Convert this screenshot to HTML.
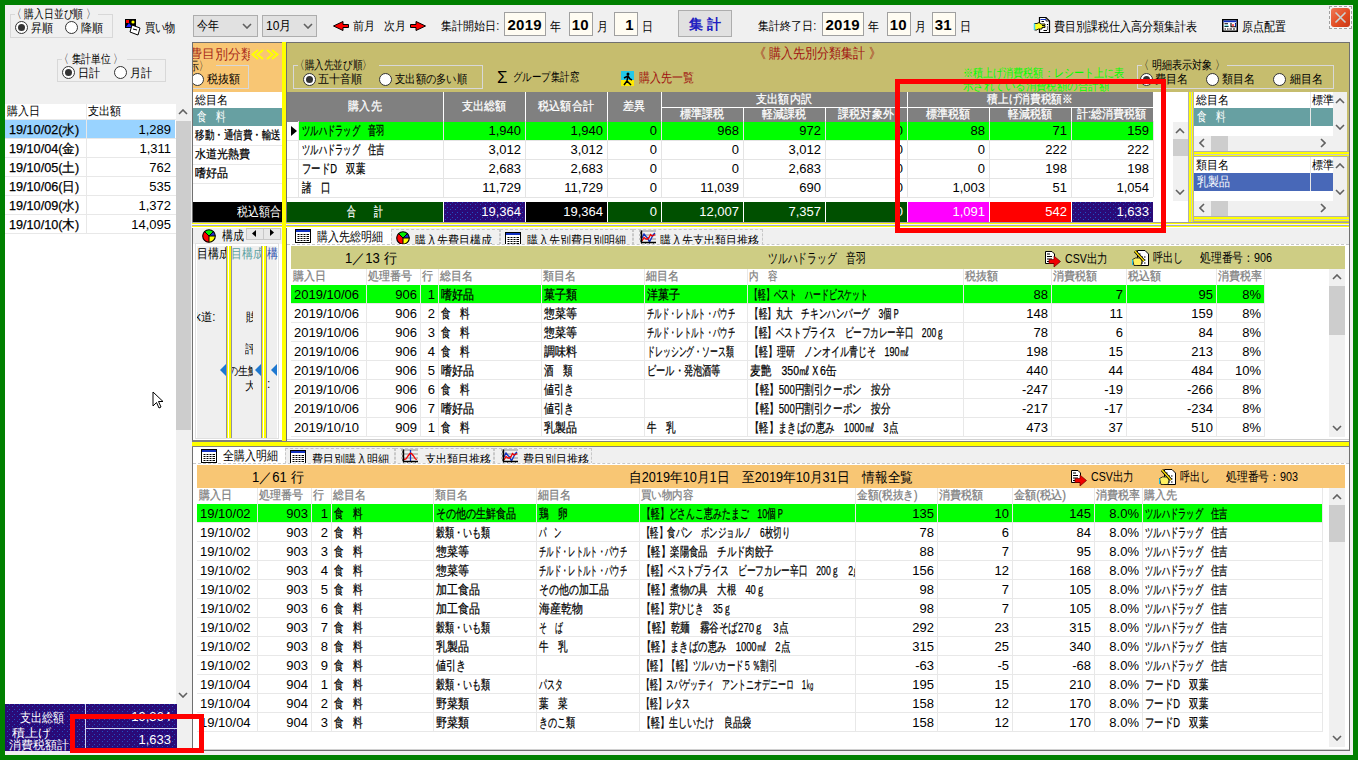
<!DOCTYPE html><html><head><meta charset="utf-8"><style>
*{margin:0;padding:0}
body{width:1358px;height:760px;overflow:hidden;background:#008000;position:relative;font-family:"Liberation Sans",sans-serif;font-size:12px;color:#000}
div,svg{position:absolute}
.t{white-space:nowrap}
.c{white-space:nowrap;overflow:hidden;box-sizing:border-box}
.c span{-webkit-text-stroke:0.25px currentColor}
.ro{width:13px;height:13px;border-radius:50%;border:1px solid #333;box-sizing:border-box}
.rd{left:2px;top:2px;width:7px;height:7px;border-radius:50%;background:#333}
.cb{background:#e1e1e1;border:1px solid #adadad;box-sizing:border-box}
.db{background:#fffcf2;border:1px solid #a0a0a0;box-sizing:border-box;font-weight:bold;font-size:15px;line-height:24px;text-align:right;padding-right:3px;letter-spacing:0.3px}
</style></head><body>
<div style="left:5px;top:5px;width:1348px;height:750px;background:#f0f0f0"></div>
<div style="left:10px;top:14px;width:103px;height:24px;border:1px solid #d8d8d8;border-top:none;box-sizing:border-box"></div>
<div style="left:10px;top:14px;width:5px;height:1px;background:#d8d8d8"></div>
<div style="left:98px;top:14px;width:15px;height:1px;background:#d8d8d8"></div>
<div class="t" style="left:12px;top:7px;height:14px;line-height:14px;color:#000"><span style="display:inline-block;transform:scaleX(0.815);transform-origin:left">〈 購入日並び順 〉</span></div>
<div class="ro" style="left:15px;top:21px;background:#fff"><div class="rd"></div></div>
<div class="t" style="left:31px;top:21px;height:14px;line-height:14px;"><span style="display:inline-block;transform:scaleX(0.917);transform-origin:left">昇順</span></div>
<div class="ro" style="left:65px;top:21px;background:#fff"></div>
<div class="t" style="left:81px;top:21px;height:14px;line-height:14px;"><span style="display:inline-block;transform:scaleX(0.917);transform-origin:left">降順</span></div>
<svg style="left:125px;top:19px" width="17" height="17"><rect x="0" y="0" width="11" height="9" fill="#000"/><rect x="1" y="1" width="3" height="3" fill="#f00"/><circle cx="8" cy="3" r="1.6" fill="#ff0"/><path d="M1 8 L4 4 L7 8Z" fill="#22f"/><path d="M7 6 L15 9 L13 16 L5 13Z" fill="#fff" stroke="#000" stroke-width="1"/><path d="M8 10 L12 11" stroke="#000"/></svg>
<div class="t" style="left:145px;top:20px;height:15px;line-height:15px;font-size:13px"><span style="display:inline-block;transform:scaleX(0.781);transform-origin:left">買い物</span></div>
<div class="cb" style="left:193px;top:15px;width:65px;height:22px;"></div>
<div class="t" style="left:197px;top:15px;height:22px;line-height:22px;font-size:13px"><span style="display:inline-block;transform:scaleX(0.846);transform-origin:left">今年</span></div>
<svg style="position:absolute;left:242px;top:23px" width="10" height="6"><path d="M1 1 L5 5 L9 1" stroke="#606060" stroke-width="1.6" fill="none"/></svg>
<div class="cb" style="left:262px;top:15px;width:55px;height:22px;"></div>
<div class="t" style="left:266px;top:15px;height:22px;line-height:22px;font-size:13px"><span style="display:inline-block;transform:scaleX(0.927);transform-origin:left">10月</span></div>
<svg style="position:absolute;left:303px;top:23px" width="10" height="6"><path d="M1 1 L5 5 L9 1" stroke="#606060" stroke-width="1.6" fill="none"/></svg>
<svg style="left:333px;top:21px" width="17" height="11"><path d="M0.5 5 L10 0.5 V3.5 H15.5 V6.5 H10 V9.5 Z" fill="#f00" stroke="#000" stroke-width="1"/></svg>
<div class="t" style="left:353px;top:19px;height:15px;line-height:15px;"><span style="display:inline-block;transform:scaleX(0.917);transform-origin:left">前月</span></div>
<div class="t" style="left:384px;top:19px;height:15px;line-height:15px;"><span style="display:inline-block;transform:scaleX(0.917);transform-origin:left">次月</span></div>
<svg style="left:410px;top:21px" width="17" height="11"><path d="M15.5 5 L6 0.5 V3.5 H0.5 V6.5 H6 V9.5 Z" fill="#f00" stroke="#000" stroke-width="1"/></svg>
<div class="t" style="left:441px;top:19px;height:15px;line-height:15px;"><span style="display:inline-block;transform:scaleX(0.921);transform-origin:left">集計開始日:</span></div>
<div class="db" style="left:504px;top:12px;width:42px;height:24px;">2019</div>
<div class="t" style="left:550px;top:19px;height:15px;line-height:15px;font-size:13px"><span style="display:inline-block;transform:scaleX(0.846);transform-origin:left">年</span></div>
<div class="db" style="left:569px;top:12px;width:24px;height:24px;">10</div>
<div class="t" style="left:597px;top:19px;height:15px;line-height:15px;font-size:13px"><span style="display:inline-block;transform:scaleX(0.846);transform-origin:left">月</span></div>
<div class="db" style="left:614px;top:12px;width:24px;height:24px;">1</div>
<div class="t" style="left:642px;top:19px;height:15px;line-height:15px;font-size:13px"><span style="display:inline-block;transform:scaleX(0.846);transform-origin:left">日</span></div>
<div style="left:678px;top:10px;width:54px;height:27px;text-align:center;line-height:27px;color:#2020c0;font-weight:bold;font-size:14px;background:#e1e1e1;border:1px solid #adadad;box-sizing:border-box">集 計</div>
<div class="t" style="left:758px;top:19px;height:15px;line-height:15px;"><span style="display:inline-block;transform:scaleX(0.921);transform-origin:left">集計終了日:</span></div>
<div class="db" style="left:822px;top:12px;width:42px;height:24px;">2019</div>
<div class="t" style="left:868px;top:19px;height:15px;line-height:15px;font-size:13px"><span style="display:inline-block;transform:scaleX(0.846);transform-origin:left">年</span></div>
<div class="db" style="left:887px;top:12px;width:24px;height:24px;">10</div>
<div class="t" style="left:915px;top:19px;height:15px;line-height:15px;font-size:13px"><span style="display:inline-block;transform:scaleX(0.846);transform-origin:left">月</span></div>
<div class="db" style="left:932px;top:12px;width:24px;height:24px;">31</div>
<div class="t" style="left:960px;top:19px;height:15px;line-height:15px;font-size:13px"><span style="display:inline-block;transform:scaleX(0.846);transform-origin:left">日</span></div>
<svg style="left:1033px;top:16px" width="18" height="18"><path d="M6.5 1.5H13L16.5 5V16.5H6.5Z" fill="#fff" stroke="#000" stroke-width="1.2"/><path d="M13 1.5V5H16.5" fill="none" stroke="#000" stroke-width="0.8"/><path d="M7.5 3.5H13" stroke="#1030c0" stroke-width="1"/><path d="M8.5 5.5H11" stroke="#000" stroke-width="1"/><path d="M14.5 8v1M14.5 10.5v1M14.5 12.5v1M10.5 14.5H14" stroke="#000" stroke-width="1.2"/><path d="M1.5 7.5H4L6 6.5L8 8H12V9.5H9L12 10V11.5H9V13H5L4 14H1.5Z" fill="#ffff20" stroke="#000" stroke-width="0.9"/><path d="M1.5 7.5V14" stroke="#40d8f0" stroke-width="1.5"/></svg>
<div class="t" style="left:1054px;top:19px;height:15px;line-height:15px;font-size:13px"><span style="display:inline-block;transform:scaleX(0.846);transform-origin:left">費目別課税仕入高分類集計表</span></div>
<svg style="left:1222px;top:19px" width="16" height="13"><rect x="0.75" y="0.75" width="14.5" height="11.5" fill="#fff" stroke="#000" stroke-width="1.5"/><rect x="1.5" y="1.5" width="13" height="1.7" fill="#1030c0"/><path d="M2.5 4.7H6M2.5 7.5H6.5M9 4V7.7H13.5V4" stroke="#000" stroke-width="1.1" fill="none"/><path d="M2.5 6.8H6.5" stroke="#20d0e0" stroke-width="0.8"/><path d="M11 5V7.5" stroke="#f00000" stroke-width="1.2"/><path d="M13.5 4.5V7.5" stroke="#1030c0" stroke-width="1"/><path d="M2.5 10H4M5 10H6.5M7.5 10H10M11 10H13" stroke="#000" stroke-width="1.1"/></svg>
<div class="t" style="left:1242px;top:19px;height:15px;line-height:15px;font-size:13px"><span style="display:inline-block;transform:scaleX(0.846);transform-origin:left">原点配置</span></div>
<div style="left:1329px;top:6px;width:23px;height:23px;background:#f4f4f4;border:1px dashed #a0a0a0;box-sizing:border-box"></div>
<div style="left:1331px;top:8px;width:19px;height:19px;background:linear-gradient(135deg,#f07858,#e04a20 60%,#c83818);border-radius:3px"></div>
<svg style="left:1331px;top:8px" width="19" height="19"><path d="M4.5 4.5 L14.5 14.5 M14.5 4.5 L4.5 14.5" stroke="#c8d4d4" stroke-width="1.6"/></svg>
<div style="left:57px;top:59px;width:109px;height:23px;border:1px solid #d8d8d8;border-top:none;box-sizing:border-box"></div>
<div style="left:57px;top:59px;width:5px;height:1px;background:#d8d8d8"></div>
<div style="left:127px;top:59px;width:39px;height:1px;background:#d8d8d8"></div>
<div class="t" style="left:59px;top:52px;height:14px;line-height:14px;color:#000"><span style="display:inline-block;transform:scaleX(0.816);transform-origin:left">〈 集計単位 〉</span></div>
<div class="ro" style="left:62px;top:66px;background:#fff"><div class="rd"></div></div>
<div class="t" style="left:78px;top:66px;height:14px;line-height:14px;"><span style="display:inline-block;transform:scaleX(0.917);transform-origin:left">日計</span></div>
<div class="ro" style="left:114px;top:66px;background:#fff"></div>
<div class="t" style="left:130px;top:66px;height:14px;line-height:14px;"><span style="display:inline-block;transform:scaleX(0.917);transform-origin:left">月計</span></div>
<div style="left:5px;top:104px;width:171px;height:647px;background:#fff"></div>
<div class="t" style="left:7px;top:104px;height:15px;line-height:15px;"><span style="display:inline-block;transform:scaleX(0.917);transform-origin:left">購入日</span></div>
<div class="t" style="left:88px;top:104px;height:15px;line-height:15px;"><span style="display:inline-block;transform:scaleX(0.917);transform-origin:left">支出額</span></div>
<div style="left:86px;top:104px;width:1px;height:15px;background:#e8e8e8"></div>
<div style="left:5px;top:120px;width:170px;height:18px;background:#99d3ff"></div>
<div style="left:5px;top:138px;width:171px;height:1px;background:#e8e8e8"></div>
<div style="left:86px;top:119px;width:1px;height:19px;background:#e8e8e8"></div>
<div class="c" style="left:5px;top:120px;width:81px;height:19px;line-height:19px;padding-left:4px;font-size:13px"><span style="display:inline-block;transform:scaleX(0.973);transform-origin:left">19/10/02(水)</span></div>
<div class="c" style="left:86px;top:120px;width:90px;height:19px;line-height:19px;text-align:right;padding-right:5px;font-size:13px">1,289</div>
<div style="left:5px;top:157px;width:171px;height:1px;background:#e8e8e8"></div>
<div style="left:86px;top:138px;width:1px;height:19px;background:#e8e8e8"></div>
<div class="c" style="left:5px;top:139px;width:81px;height:19px;line-height:19px;padding-left:4px;font-size:13px"><span style="display:inline-block;transform:scaleX(0.973);transform-origin:left">19/10/04(金)</span></div>
<div class="c" style="left:86px;top:139px;width:90px;height:19px;line-height:19px;text-align:right;padding-right:5px;font-size:13px">1,311</div>
<div style="left:5px;top:176px;width:171px;height:1px;background:#e8e8e8"></div>
<div style="left:86px;top:157px;width:1px;height:19px;background:#e8e8e8"></div>
<div class="c" style="left:5px;top:158px;width:81px;height:19px;line-height:19px;padding-left:4px;font-size:13px"><span style="display:inline-block;transform:scaleX(0.973);transform-origin:left">19/10/05(土)</span></div>
<div class="c" style="left:86px;top:158px;width:90px;height:19px;line-height:19px;text-align:right;padding-right:5px;font-size:13px">762</div>
<div style="left:5px;top:195px;width:171px;height:1px;background:#e8e8e8"></div>
<div style="left:86px;top:176px;width:1px;height:19px;background:#e8e8e8"></div>
<div class="c" style="left:5px;top:177px;width:81px;height:19px;line-height:19px;padding-left:4px;font-size:13px"><span style="display:inline-block;transform:scaleX(0.973);transform-origin:left">19/10/06(日)</span></div>
<div class="c" style="left:86px;top:177px;width:90px;height:19px;line-height:19px;text-align:right;padding-right:5px;font-size:13px">535</div>
<div style="left:5px;top:214px;width:171px;height:1px;background:#e8e8e8"></div>
<div style="left:86px;top:195px;width:1px;height:19px;background:#e8e8e8"></div>
<div class="c" style="left:5px;top:196px;width:81px;height:19px;line-height:19px;padding-left:4px;font-size:13px"><span style="display:inline-block;transform:scaleX(0.973);transform-origin:left">19/10/09(水)</span></div>
<div class="c" style="left:86px;top:196px;width:90px;height:19px;line-height:19px;text-align:right;padding-right:5px;font-size:13px">1,372</div>
<div style="left:5px;top:233px;width:171px;height:1px;background:#e8e8e8"></div>
<div style="left:86px;top:214px;width:1px;height:19px;background:#e8e8e8"></div>
<div class="c" style="left:5px;top:215px;width:81px;height:19px;line-height:19px;padding-left:4px;font-size:13px"><span style="display:inline-block;transform:scaleX(0.973);transform-origin:left">19/10/10(木)</span></div>
<div class="c" style="left:86px;top:215px;width:90px;height:19px;line-height:19px;text-align:right;padding-right:5px;font-size:13px">14,095</div>
<div style="left:5px;top:119px;width:171px;height:1px;background:#e8e8e8"></div>
<div style="left:176px;top:104px;width:15px;height:600px;background:#f0f0f0"></div>
<div style="left:176px;top:121px;width:15px;height:309px;background:#cdcdcd"></div>
<svg style="position:absolute;left:178px;top:109px" width="10" height="6"><path d="M1 5 L5 1 L9 5" stroke="#606060" stroke-width="1.6" fill="none"/></svg>
<svg style="position:absolute;left:178px;top:692px" width="10" height="6"><path d="M1 1 L5 5 L9 1" stroke="#606060" stroke-width="1.6" fill="none"/></svg>
<svg style="left:152px;top:391px" width="14" height="20"><path d="M1 1 L1 15 L4.5 11.5 L7 17 L9 16 L6.5 10.5 L11 10.5Z" fill="#fff" stroke="#000" stroke-width="1"/></svg>
<div style="left:5px;top:704px;width:172px;height:47px;background:#2a0a78;background-image:radial-gradient(#2050c0 0.5px, transparent 0.6px),radial-gradient(#2050c0 0.5px, transparent 0.6px);background-size:5px 5px;background-position:0 0,2px 3px"></div>
<div style="left:85px;top:704px;width:1px;height:47px;background:#d0d0f0"></div>
<div style="left:86px;top:728px;width:91px;height:1px;background:#d0d0f0"></div>
<div class="t" style="left:20px;top:709px;height:18px;line-height:18px;color:#fff;font-size:13px"><span style="display:inline-block;transform:scaleX(0.846);transform-origin:left">支出総額</span></div>
<div class="t" style="left:12px;top:727px;height:12px;line-height:12px;color:#fff;font-size:12px"><span style="display:inline-block;transform:scaleX(1.083);transform-origin:left">積上げ</span></div>
<div class="t" style="left:9px;top:739px;height:12px;line-height:12px;color:#fff;font-size:12px"><span style="display:inline-block;transform:scaleX(1.000);transform-origin:left">消費税額計</span></div>
<div class="c" style="left:86px;top:705px;width:91px;height:23px;line-height:23px;text-align:right;padding-right:6px;color:#fff;font-size:13px">19,364</div>
<div class="c" style="left:86px;top:729px;width:91px;height:22px;line-height:22px;text-align:right;padding-right:6px;color:#fff;font-size:13px">1,633</div>
<div style="left:192px;top:42px;width:90px;height:180px;background:#fff;border-left:1px solid #707070;border-top:1px solid #707070;box-sizing:border-box;overflow:hidden"></div>
<div style="left:193px;top:43px;width:89px;height:49px;background:#f8c674"></div>
<div style="left:193px;top:43px;width:89px;height:49px;overflow:hidden"><div style="left:0;top:0;width:57px;height:20px;overflow:hidden"><div class="t" style="left:-4px;top:3px;color:#a82a1a;font-size:14px;line-height:16px"><span style="display:inline-block;transform:scaleX(0.930);transform-origin:left">費目別分類</span></div></div><svg style="left:58px;top:6px" width="29" height="11"><path d="M7 1L1.5 5.5L7 10M12 1L6.5 5.5L12 10M16 1L21.5 5.5L16 10M21 1L26.5 5.5L21 10" stroke="#ffff00" stroke-width="2" fill="none"/></svg><div style="left:-60px;top:22px;width:116px;height:24px;border:1px solid #d8d8d8;box-sizing:border-box"></div><div class="t" style="left:-3px;top:16px;font-size:12px;line-height:14px;background:#f8c674;padding-right:2px"><span style="display:inline-block;transform:scaleX(0.733);transform-origin:left">示〉</span></div><div class="t" style="left:14px;top:29px;font-size:12px;line-height:14px"><span style="display:inline-block;transform:scaleX(0.917);transform-origin:left">税抜額</span></div></div>
<div style="left:193px;top:72px;width:12px;height:15px;overflow:hidden"><div class="ro" style="left:-2px;top:1px;background:#fff"></div></div>
<div style="left:193px;top:92px;width:89px;height:16px;background:#fff"></div>
<div class="t" style="left:195px;top:92px;height:16px;line-height:16px;"><span style="display:inline-block;transform:scaleX(0.917);transform-origin:left">総目名</span></div>
<div style="left:193px;top:108px;width:89px;height:18px;background:#67a0a2"></div>
<div class="t" style="left:197px;top:108px;height:18px;line-height:18px;color:#fff;font-size:13px"><span style="display:inline-block;transform:scaleX(0.733);transform-origin:left">食　料</span></div>
<div class="c" style="left:193px;top:126px;width:88px;height:19px;line-height:19px;padding-left:2px;font-size:12px"><span style="display:inline-block;transform:scaleX(0.794);transform-origin:left">移動・通信費・輸送</span></div>
<div style="left:193px;top:145px;width:89px;height:1px;background:#e8e8e8"></div>
<div class="c" style="left:193px;top:145px;width:88px;height:19px;line-height:19px;padding-left:2px;font-size:12px"><span style="display:inline-block;transform:scaleX(0.917);transform-origin:left">水道光熱費</span></div>
<div style="left:193px;top:164px;width:89px;height:1px;background:#e8e8e8"></div>
<div class="c" style="left:193px;top:164px;width:88px;height:19px;line-height:19px;padding-left:2px;font-size:12px"><span style="display:inline-block;transform:scaleX(0.917);transform-origin:left">嗜好品</span></div>
<div style="left:193px;top:183px;width:89px;height:1px;background:#e8e8e8"></div>
<div style="left:193px;top:202px;width:89px;height:20px;background:#000"></div>
<div style="left:193px;top:202px;width:88px;height:20px;overflow:hidden"><div class="t" style="left:44px;top:0;line-height:20px;color:#fff;font-size:13px"><span style="display:inline-block;transform:scaleX(0.846);transform-origin:left">税込額合計</span></div></div>
<div style="left:282px;top:42px;width:4px;height:405px;background:#ffff00"></div>
<div style="left:286px;top:42px;width:1064px;height:180px;background:#c6bd6e;border:1px solid #707070;border-bottom:none;box-sizing:border-box"></div>
<div style="left:293px;top:65px;width:190px;height:24px;border:1px solid #d8d8d8;border-top:none;box-sizing:border-box"></div>
<div style="left:293px;top:65px;width:5px;height:1px;background:#d8d8d8"></div>
<div style="left:379px;top:65px;width:104px;height:1px;background:#d8d8d8"></div>
<div class="t" style="left:295px;top:58px;height:14px;line-height:14px;color:#000"><span style="display:inline-block;transform:scaleX(0.799);transform-origin:left">〈購入先並び順〉</span></div>
<div class="ro" style="left:303px;top:73px;background:#fff"><div class="rd"></div></div>
<div class="t" style="left:318px;top:72px;height:14px;line-height:14px;"><span style="display:inline-block;transform:scaleX(0.917);transform-origin:left">五十音順</span></div>
<div class="ro" style="left:379px;top:73px;background:#fff"></div>
<div class="t" style="left:395px;top:72px;height:14px;line-height:14px;"><span style="display:inline-block;transform:scaleX(0.856);transform-origin:left">支出額の多い順</span></div>
<div class="t" style="left:497px;top:69px;height:18px;line-height:18px;font-size:17px">Σ</div>
<div class="t" style="left:513px;top:70px;height:15px;line-height:15px;"><span style="display:inline-block;transform:scaleX(0.787);transform-origin:left">グループ集計窓</span></div>
<svg style="left:621px;top:71px" width="13" height="15"><rect width="13" height="15" fill="#22c8e8"/><rect y="9" width="13" height="6" fill="#ffea00"/><circle cx="7" cy="3" r="1.5" fill="#000"/><path d="M3 7 L7 5 L9 8 L11 9 M7 5 L6 10 L3 14 M6 10 L10 14" stroke="#000" stroke-width="1.5" fill="none"/></svg>
<div class="t" style="left:639px;top:70px;height:15px;line-height:15px;color:#a01010;font-size:13px"><span style="display:inline-block;transform:scaleX(0.846);transform-origin:left">購入先一覧</span></div>
<div class="t" style="left:754px;top:45px;height:16px;line-height:16px;color:#a01010;font-size:14px"><span style="display:inline-block;transform:scaleX(0.858);transform-origin:left">《 購入先別分類集計 》</span></div>
<div class="t" style="left:963px;top:66px;height:14px;line-height:14px;color:#00ff00;font-size:12px"><span style="display:inline-block;transform:scaleX(0.839);transform-origin:left">※積上げ消費税額：レシート上に表</span></div>
<div class="t" style="left:963px;top:79px;height:14px;line-height:14px;color:#00ff00;font-size:12px"><span style="display:inline-block;transform:scaleX(0.869);transform-origin:left">示されている消費税額の合計額</span></div>
<div style="left:1137px;top:65px;width:197px;height:24px;border:1px solid #d8d8d8;border-top:none;box-sizing:border-box"></div>
<div style="left:1137px;top:65px;width:5px;height:1px;background:#d8d8d8"></div>
<div style="left:1227px;top:65px;width:107px;height:1px;background:#d8d8d8"></div>
<div class="t" style="left:1139px;top:58px;height:14px;line-height:14px;color:#000"><span style="display:inline-block;transform:scaleX(0.840);transform-origin:left">〈 明細表示対象 〉</span></div>
<div class="ro" style="left:1140px;top:73px;background:#fff"><div class="rd"></div></div>
<div class="t" style="left:1155px;top:72px;height:14px;line-height:14px;"><span style="display:inline-block;transform:scaleX(0.917);transform-origin:left">費目名</span></div>
<div class="ro" style="left:1206px;top:73px;background:#fff"></div>
<div class="t" style="left:1222px;top:72px;height:14px;line-height:14px;"><span style="display:inline-block;transform:scaleX(0.917);transform-origin:left">類目名</span></div>
<div class="ro" style="left:1273px;top:73px;background:#fff"></div>
<div class="t" style="left:1290px;top:72px;height:14px;line-height:14px;"><span style="display:inline-block;transform:scaleX(0.917);transform-origin:left">細目名</span></div>
<div style="left:287px;top:92px;width:902px;height:130px;background:#fff"></div>
<div style="left:287px;top:92px;width:866px;height:30px;background:#808080"></div>
<div class="c" style="left:287px;top:92px;width:156px;height:29px;line-height:29px;text-align:center;color:#fff;font-size:12px"><span style="display:inline-block;transform:scaleX(0.917);transform-origin:center">購入先</span></div>
<div class="c" style="left:443px;top:92px;width:82px;height:29px;line-height:29px;text-align:center;color:#fff;font-size:12px"><span style="display:inline-block;transform:scaleX(0.917);transform-origin:center">支出総額</span></div>
<div class="c" style="left:525px;top:92px;width:82px;height:29px;line-height:29px;text-align:center;color:#fff;font-size:12px"><span style="display:inline-block;transform:scaleX(0.917);transform-origin:center">税込額合計</span></div>
<div class="c" style="left:607px;top:92px;width:54px;height:29px;line-height:29px;text-align:center;color:#fff;font-size:12px"><span style="display:inline-block;transform:scaleX(0.917);transform-origin:center">差異</span></div>
<div class="c" style="left:661px;top:92px;width:246px;height:15px;line-height:15px;text-align:center;color:#fff;font-size:12px"><span style="display:inline-block;transform:scaleX(0.917);transform-origin:center">支出額内訳</span></div>
<div class="c" style="left:907px;top:92px;width:246px;height:15px;line-height:15px;text-align:center;color:#fff;font-size:12px"><span style="display:inline-block;transform:scaleX(0.890);transform-origin:center">積上げ消費税額※</span></div>
<div class="c" style="left:661px;top:107px;width:82px;height:14px;line-height:14px;text-align:center;color:#fff;font-size:12px"><span style="display:inline-block;transform:scaleX(0.917);transform-origin:center">標準課税</span></div>
<div class="c" style="left:743px;top:107px;width:82px;height:14px;line-height:14px;text-align:center;color:#fff;font-size:12px"><span style="display:inline-block;transform:scaleX(0.917);transform-origin:center">軽減課税</span></div>
<div class="c" style="left:825px;top:107px;width:82px;height:14px;line-height:14px;text-align:center;color:#fff;font-size:12px"><span style="display:inline-block;transform:scaleX(0.917);transform-origin:center">課税対象外</span></div>
<div class="c" style="left:907px;top:107px;width:82px;height:14px;line-height:14px;text-align:center;color:#fff;font-size:12px"><span style="display:inline-block;transform:scaleX(0.917);transform-origin:center">標準税額</span></div>
<div class="c" style="left:989px;top:107px;width:82px;height:14px;line-height:14px;text-align:center;color:#fff;font-size:12px"><span style="display:inline-block;transform:scaleX(0.917);transform-origin:center">軽減税額</span></div>
<div class="c" style="left:1071px;top:107px;width:82px;height:14px;line-height:14px;text-align:center;color:#fff;font-size:12px"><span style="display:inline-block;transform:scaleX(0.920);transform-origin:center">計:総消費税額</span></div>
<div style="left:443px;top:92px;width:1px;height:29px;background:#fff"></div>
<div style="left:525px;top:92px;width:1px;height:29px;background:#fff"></div>
<div style="left:607px;top:92px;width:1px;height:29px;background:#fff"></div>
<div style="left:661px;top:92px;width:1px;height:29px;background:#fff"></div>
<div style="left:907px;top:92px;width:1px;height:29px;background:#fff"></div>
<div style="left:743px;top:107px;width:1px;height:14px;background:#fff"></div>
<div style="left:825px;top:107px;width:1px;height:14px;background:#fff"></div>
<div style="left:989px;top:107px;width:1px;height:14px;background:#fff"></div>
<div style="left:1071px;top:107px;width:1px;height:14px;background:#fff"></div>
<div style="left:661px;top:107px;width:492px;height:1px;background:#fff"></div>
<div style="left:299px;top:122px;width:854px;height:18px;background:#00ff00"></div>
<svg style="left:291px;top:126px" width="6" height="10"><path d="M0 0 L6 5 L0 10Z" fill="#000"/></svg>
<div style="left:287px;top:140px;width:866px;height:1px;background:#e4e4e4"></div>
<div style="left:298px;top:121px;width:1px;height:19px;background:#e4e4e4"></div>
<div class="c" style="left:299px;top:121px;width:144px;height:19px;line-height:19px;padding-left:3px;font-size:13px"><span style="display:inline-block;transform:scaleX(0.636);transform-origin:left">ツルハドラッグ　音羽</span></div>
<div class="c" style="left:443px;top:121px;width:82px;height:19px;line-height:19px;text-align:right;padding-right:4px;font-size:13px">1,940</div>
<div class="c" style="left:525px;top:121px;width:82px;height:19px;line-height:19px;text-align:right;padding-right:4px;font-size:13px">1,940</div>
<div class="c" style="left:607px;top:121px;width:54px;height:19px;line-height:19px;text-align:right;padding-right:4px;font-size:13px">0</div>
<div class="c" style="left:661px;top:121px;width:82px;height:19px;line-height:19px;text-align:right;padding-right:4px;font-size:13px">968</div>
<div class="c" style="left:743px;top:121px;width:82px;height:19px;line-height:19px;text-align:right;padding-right:4px;font-size:13px">972</div>
<div class="c" style="left:825px;top:121px;width:82px;height:19px;line-height:19px;text-align:right;padding-right:4px;font-size:13px">0</div>
<div class="c" style="left:907px;top:121px;width:82px;height:19px;line-height:19px;text-align:right;padding-right:4px;font-size:13px">88</div>
<div class="c" style="left:989px;top:121px;width:82px;height:19px;line-height:19px;text-align:right;padding-right:4px;font-size:13px">71</div>
<div class="c" style="left:1071px;top:121px;width:82px;height:19px;line-height:19px;text-align:right;padding-right:4px;font-size:13px">159</div>
<div style="left:443px;top:121px;width:1px;height:19px;background:#e4e4e4"></div>
<div style="left:525px;top:121px;width:1px;height:19px;background:#e4e4e4"></div>
<div style="left:607px;top:121px;width:1px;height:19px;background:#e4e4e4"></div>
<div style="left:661px;top:121px;width:1px;height:19px;background:#e4e4e4"></div>
<div style="left:743px;top:121px;width:1px;height:19px;background:#e4e4e4"></div>
<div style="left:825px;top:121px;width:1px;height:19px;background:#e4e4e4"></div>
<div style="left:907px;top:121px;width:1px;height:19px;background:#e4e4e4"></div>
<div style="left:989px;top:121px;width:1px;height:19px;background:#e4e4e4"></div>
<div style="left:1071px;top:121px;width:1px;height:19px;background:#e4e4e4"></div>
<div style="left:1153px;top:121px;width:1px;height:19px;background:#e4e4e4"></div>
<div style="left:287px;top:159px;width:866px;height:1px;background:#e4e4e4"></div>
<div style="left:298px;top:140px;width:1px;height:19px;background:#e4e4e4"></div>
<div class="c" style="left:299px;top:140px;width:144px;height:19px;line-height:19px;padding-left:3px;font-size:13px"><span style="display:inline-block;transform:scaleX(0.636);transform-origin:left">ツルハドラッグ　住吉</span></div>
<div class="c" style="left:443px;top:140px;width:82px;height:19px;line-height:19px;text-align:right;padding-right:4px;font-size:13px">3,012</div>
<div class="c" style="left:525px;top:140px;width:82px;height:19px;line-height:19px;text-align:right;padding-right:4px;font-size:13px">3,012</div>
<div class="c" style="left:607px;top:140px;width:54px;height:19px;line-height:19px;text-align:right;padding-right:4px;font-size:13px">0</div>
<div class="c" style="left:661px;top:140px;width:82px;height:19px;line-height:19px;text-align:right;padding-right:4px;font-size:13px">0</div>
<div class="c" style="left:743px;top:140px;width:82px;height:19px;line-height:19px;text-align:right;padding-right:4px;font-size:13px">3,012</div>
<div class="c" style="left:825px;top:140px;width:82px;height:19px;line-height:19px;text-align:right;padding-right:4px;font-size:13px">0</div>
<div class="c" style="left:907px;top:140px;width:82px;height:19px;line-height:19px;text-align:right;padding-right:4px;font-size:13px">0</div>
<div class="c" style="left:989px;top:140px;width:82px;height:19px;line-height:19px;text-align:right;padding-right:4px;font-size:13px">222</div>
<div class="c" style="left:1071px;top:140px;width:82px;height:19px;line-height:19px;text-align:right;padding-right:4px;font-size:13px">222</div>
<div style="left:443px;top:140px;width:1px;height:19px;background:#e4e4e4"></div>
<div style="left:525px;top:140px;width:1px;height:19px;background:#e4e4e4"></div>
<div style="left:607px;top:140px;width:1px;height:19px;background:#e4e4e4"></div>
<div style="left:661px;top:140px;width:1px;height:19px;background:#e4e4e4"></div>
<div style="left:743px;top:140px;width:1px;height:19px;background:#e4e4e4"></div>
<div style="left:825px;top:140px;width:1px;height:19px;background:#e4e4e4"></div>
<div style="left:907px;top:140px;width:1px;height:19px;background:#e4e4e4"></div>
<div style="left:989px;top:140px;width:1px;height:19px;background:#e4e4e4"></div>
<div style="left:1071px;top:140px;width:1px;height:19px;background:#e4e4e4"></div>
<div style="left:1153px;top:140px;width:1px;height:19px;background:#e4e4e4"></div>
<div style="left:287px;top:178px;width:866px;height:1px;background:#e4e4e4"></div>
<div style="left:298px;top:159px;width:1px;height:19px;background:#e4e4e4"></div>
<div class="c" style="left:299px;top:159px;width:144px;height:19px;line-height:19px;padding-left:3px;font-size:13px"><span style="display:inline-block;transform:scaleX(0.723);transform-origin:left">フードD　双葉</span></div>
<div class="c" style="left:443px;top:159px;width:82px;height:19px;line-height:19px;text-align:right;padding-right:4px;font-size:13px">2,683</div>
<div class="c" style="left:525px;top:159px;width:82px;height:19px;line-height:19px;text-align:right;padding-right:4px;font-size:13px">2,683</div>
<div class="c" style="left:607px;top:159px;width:54px;height:19px;line-height:19px;text-align:right;padding-right:4px;font-size:13px">0</div>
<div class="c" style="left:661px;top:159px;width:82px;height:19px;line-height:19px;text-align:right;padding-right:4px;font-size:13px">0</div>
<div class="c" style="left:743px;top:159px;width:82px;height:19px;line-height:19px;text-align:right;padding-right:4px;font-size:13px">2,683</div>
<div class="c" style="left:825px;top:159px;width:82px;height:19px;line-height:19px;text-align:right;padding-right:4px;font-size:13px">0</div>
<div class="c" style="left:907px;top:159px;width:82px;height:19px;line-height:19px;text-align:right;padding-right:4px;font-size:13px">0</div>
<div class="c" style="left:989px;top:159px;width:82px;height:19px;line-height:19px;text-align:right;padding-right:4px;font-size:13px">198</div>
<div class="c" style="left:1071px;top:159px;width:82px;height:19px;line-height:19px;text-align:right;padding-right:4px;font-size:13px">198</div>
<div style="left:443px;top:159px;width:1px;height:19px;background:#e4e4e4"></div>
<div style="left:525px;top:159px;width:1px;height:19px;background:#e4e4e4"></div>
<div style="left:607px;top:159px;width:1px;height:19px;background:#e4e4e4"></div>
<div style="left:661px;top:159px;width:1px;height:19px;background:#e4e4e4"></div>
<div style="left:743px;top:159px;width:1px;height:19px;background:#e4e4e4"></div>
<div style="left:825px;top:159px;width:1px;height:19px;background:#e4e4e4"></div>
<div style="left:907px;top:159px;width:1px;height:19px;background:#e4e4e4"></div>
<div style="left:989px;top:159px;width:1px;height:19px;background:#e4e4e4"></div>
<div style="left:1071px;top:159px;width:1px;height:19px;background:#e4e4e4"></div>
<div style="left:1153px;top:159px;width:1px;height:19px;background:#e4e4e4"></div>
<div style="left:287px;top:197px;width:866px;height:1px;background:#e4e4e4"></div>
<div style="left:298px;top:178px;width:1px;height:19px;background:#e4e4e4"></div>
<div class="c" style="left:299px;top:178px;width:144px;height:19px;line-height:19px;padding-left:3px;font-size:13px"><span style="display:inline-block;transform:scaleX(0.733);transform-origin:left">諸　口</span></div>
<div class="c" style="left:443px;top:178px;width:82px;height:19px;line-height:19px;text-align:right;padding-right:4px;font-size:13px">11,729</div>
<div class="c" style="left:525px;top:178px;width:82px;height:19px;line-height:19px;text-align:right;padding-right:4px;font-size:13px">11,729</div>
<div class="c" style="left:607px;top:178px;width:54px;height:19px;line-height:19px;text-align:right;padding-right:4px;font-size:13px">0</div>
<div class="c" style="left:661px;top:178px;width:82px;height:19px;line-height:19px;text-align:right;padding-right:4px;font-size:13px">11,039</div>
<div class="c" style="left:743px;top:178px;width:82px;height:19px;line-height:19px;text-align:right;padding-right:4px;font-size:13px">690</div>
<div class="c" style="left:825px;top:178px;width:82px;height:19px;line-height:19px;text-align:right;padding-right:4px;font-size:13px">0</div>
<div class="c" style="left:907px;top:178px;width:82px;height:19px;line-height:19px;text-align:right;padding-right:4px;font-size:13px">1,003</div>
<div class="c" style="left:989px;top:178px;width:82px;height:19px;line-height:19px;text-align:right;padding-right:4px;font-size:13px">51</div>
<div class="c" style="left:1071px;top:178px;width:82px;height:19px;line-height:19px;text-align:right;padding-right:4px;font-size:13px">1,054</div>
<div style="left:443px;top:178px;width:1px;height:19px;background:#e4e4e4"></div>
<div style="left:525px;top:178px;width:1px;height:19px;background:#e4e4e4"></div>
<div style="left:607px;top:178px;width:1px;height:19px;background:#e4e4e4"></div>
<div style="left:661px;top:178px;width:1px;height:19px;background:#e4e4e4"></div>
<div style="left:743px;top:178px;width:1px;height:19px;background:#e4e4e4"></div>
<div style="left:825px;top:178px;width:1px;height:19px;background:#e4e4e4"></div>
<div style="left:907px;top:178px;width:1px;height:19px;background:#e4e4e4"></div>
<div style="left:989px;top:178px;width:1px;height:19px;background:#e4e4e4"></div>
<div style="left:1071px;top:178px;width:1px;height:19px;background:#e4e4e4"></div>
<div style="left:1153px;top:178px;width:1px;height:19px;background:#e4e4e4"></div>
<div style="left:287px;top:202px;width:866px;height:20px;background:#005000"></div>
<div style="left:443px;top:202px;width:82px;height:20px;background:#2a0a78;background-image:radial-gradient(#2050c0 0.5px, transparent 0.6px),radial-gradient(#2050c0 0.5px, transparent 0.6px);background-size:5px 5px;background-position:0 0,2px 3px"></div>
<div style="left:525px;top:202px;width:82px;height:20px;background:#000"></div>
<div style="left:907px;top:202px;width:82px;height:20px;background:#ff00ff"></div>
<div style="left:989px;top:202px;width:82px;height:20px;background:#ff0000"></div>
<div style="left:1071px;top:202px;width:82px;height:20px;background:#2a0a78;background-image:radial-gradient(#2050c0 0.5px, transparent 0.6px),radial-gradient(#2050c0 0.5px, transparent 0.6px);background-size:5px 5px;background-position:0 0,2px 3px"></div>
<div class="c" style="left:287px;top:202px;width:156px;height:20px;line-height:20px;text-align:center;color:#fff;font-size:13px"><span style="display:inline-block;transform:scaleX(0.677);transform-origin:center">合　　計</span></div>
<div class="c" style="left:443px;top:202px;width:82px;height:20px;line-height:20px;text-align:right;padding-right:4px;color:#fff;font-size:13px">19,364</div>
<div class="c" style="left:525px;top:202px;width:82px;height:20px;line-height:20px;text-align:right;padding-right:4px;color:#fff;font-size:13px">19,364</div>
<div class="c" style="left:607px;top:202px;width:54px;height:20px;line-height:20px;text-align:right;padding-right:4px;color:#fff;font-size:13px">0</div>
<div class="c" style="left:661px;top:202px;width:82px;height:20px;line-height:20px;text-align:right;padding-right:4px;color:#fff;font-size:13px">12,007</div>
<div class="c" style="left:743px;top:202px;width:82px;height:20px;line-height:20px;text-align:right;padding-right:4px;color:#fff;font-size:13px">7,357</div>
<div class="c" style="left:825px;top:202px;width:82px;height:20px;line-height:20px;text-align:right;padding-right:4px;color:#fff;font-size:13px">0</div>
<div class="c" style="left:907px;top:202px;width:82px;height:20px;line-height:20px;text-align:right;padding-right:4px;color:#fff;font-size:13px">1,091</div>
<div class="c" style="left:989px;top:202px;width:82px;height:20px;line-height:20px;text-align:right;padding-right:4px;color:#fff;font-size:13px">542</div>
<div class="c" style="left:1071px;top:202px;width:82px;height:20px;line-height:20px;text-align:right;padding-right:4px;color:#fff;font-size:13px">1,633</div>
<div style="left:443px;top:202px;width:1px;height:20px;background:#fff"></div>
<div style="left:525px;top:202px;width:1px;height:20px;background:#fff"></div>
<div style="left:607px;top:202px;width:1px;height:20px;background:#fff"></div>
<div style="left:661px;top:202px;width:1px;height:20px;background:#fff"></div>
<div style="left:743px;top:202px;width:1px;height:20px;background:#fff"></div>
<div style="left:825px;top:202px;width:1px;height:20px;background:#fff"></div>
<div style="left:907px;top:202px;width:1px;height:20px;background:#fff"></div>
<div style="left:989px;top:202px;width:1px;height:20px;background:#fff"></div>
<div style="left:1071px;top:202px;width:1px;height:20px;background:#fff"></div>
<div style="left:1153px;top:202px;width:1px;height:20px;background:#fff"></div>
<div style="left:1173px;top:122px;width:15px;height:79px;background:#f0f0f0"></div>
<div style="left:1173px;top:139px;width:15px;height:17px;background:#cdcdcd"></div>
<svg style="position:absolute;left:1175px;top:128px" width="10" height="6"><path d="M1 5 L5 1 L9 5" stroke="#606060" stroke-width="1.6" fill="none"/></svg>
<svg style="position:absolute;left:1175px;top:189px" width="10" height="6"><path d="M1 1 L5 5 L9 1" stroke="#606060" stroke-width="1.6" fill="none"/></svg>
<div style="left:1188px;top:92px;width:1px;height:130px;background:#b0b0b0"></div>
<div style="left:1189px;top:92px;width:2px;height:130px;background:#ffff00"></div>
<div style="left:1191px;top:92px;width:1px;height:130px;background:#c8c8c8"></div>
<div style="left:1192px;top:92px;width:1px;height:130px;background:#ffff00"></div>
<div style="left:1193px;top:92px;width:1px;height:130px;background:#b0b0b0"></div>
<div style="left:1194px;top:92px;width:153px;height:59px;background:#f0f0f0"></div>
<div style="left:1194px;top:92px;width:139px;height:44px;background:#fff"></div>
<div class="t" style="left:1196px;top:92px;height:16px;line-height:16px;"><span style="display:inline-block;transform:scaleX(0.917);transform-origin:left">総目名</span></div>
<div style="left:1310px;top:92px;width:1px;height:34px;background:#e8e8e8"></div>
<div class="t" style="left:1312px;top:92px;height:16px;line-height:16px;"><span style="display:inline-block;transform:scaleX(0.917);transform-origin:left">標準</span></div>
<div style="left:1194px;top:108px;width:116px;height:18px;background:#67a0a2"></div>
<div style="left:1311px;top:108px;width:22px;height:18px;background:#67a0a2"></div>
<div class="t" style="left:1197px;top:108px;height:18px;line-height:18px;color:#fff;font-size:13px"><span style="display:inline-block;transform:scaleX(0.733);transform-origin:left">食　料</span></div>
<svg style="position:absolute;left:1335px;top:98px" width="10" height="6"><path d="M1 5 L5 1 L9 5" stroke="#606060" stroke-width="1.6" fill="none"/></svg>
<svg style="position:absolute;left:1335px;top:124px" width="10" height="6"><path d="M1 1 L5 5 L9 1" stroke="#606060" stroke-width="1.6" fill="none"/></svg>
<div style="left:1194px;top:136px;width:139px;height:15px;background:#f0f0f0"></div>
<div style="left:1211px;top:136px;width:17px;height:15px;background:#cdcdcd"></div>
<svg style="position:absolute;left:1199px;top:138px" width="6" height="10"><path d="M5 1 L1 5 L5 9" stroke="#606060" stroke-width="1.6" fill="none"/></svg>
<svg style="position:absolute;left:1320px;top:138px" width="6" height="10"><path d="M1 1 L5 5 L1 9" stroke="#606060" stroke-width="1.6" fill="none"/></svg>
<div style="left:1194px;top:151px;width:155px;height:1px;background:#b0b0b0"></div>
<div style="left:1194px;top:152px;width:155px;height:2px;background:#ffff00"></div>
<div style="left:1194px;top:154px;width:155px;height:1px;background:#c8c8c8"></div>
<div style="left:1194px;top:155px;width:155px;height:1px;background:#ffff00"></div>
<div style="left:1194px;top:156px;width:155px;height:1px;background:#b0b0b0"></div>
<div style="left:1194px;top:157px;width:153px;height:59px;background:#f0f0f0"></div>
<div style="left:1194px;top:157px;width:139px;height:44px;background:#fff"></div>
<div class="t" style="left:1196px;top:157px;height:16px;line-height:16px;"><span style="display:inline-block;transform:scaleX(0.917);transform-origin:left">類目名</span></div>
<div style="left:1310px;top:157px;width:1px;height:34px;background:#e8e8e8"></div>
<div class="t" style="left:1312px;top:157px;height:16px;line-height:16px;"><span style="display:inline-block;transform:scaleX(0.917);transform-origin:left">標準</span></div>
<div style="left:1194px;top:173px;width:116px;height:18px;background:#4868b8"></div>
<div style="left:1311px;top:173px;width:22px;height:18px;background:#4868b8"></div>
<div class="t" style="left:1197px;top:173px;height:18px;line-height:18px;color:#fff;font-size:13px"><span style="display:inline-block;transform:scaleX(0.846);transform-origin:left">乳製品</span></div>
<svg style="position:absolute;left:1335px;top:163px" width="10" height="6"><path d="M1 5 L5 1 L9 5" stroke="#606060" stroke-width="1.6" fill="none"/></svg>
<svg style="position:absolute;left:1335px;top:189px" width="10" height="6"><path d="M1 1 L5 5 L9 1" stroke="#606060" stroke-width="1.6" fill="none"/></svg>
<div style="left:1194px;top:201px;width:139px;height:15px;background:#f0f0f0"></div>
<div style="left:1211px;top:201px;width:17px;height:15px;background:#cdcdcd"></div>
<svg style="position:absolute;left:1199px;top:203px" width="6" height="10"><path d="M5 1 L1 5 L5 9" stroke="#606060" stroke-width="1.6" fill="none"/></svg>
<svg style="position:absolute;left:1320px;top:203px" width="6" height="10"><path d="M1 1 L5 5 L1 9" stroke="#606060" stroke-width="1.6" fill="none"/></svg>
<div style="left:1194px;top:216px;width:155px;height:1px;background:#b0b0b0"></div>
<div style="left:1194px;top:217px;width:155px;height:2px;background:#ffff00"></div>
<div style="left:1194px;top:219px;width:155px;height:1px;background:#c8c8c8"></div>
<div style="left:1194px;top:220px;width:155px;height:1px;background:#ffff00"></div>
<div style="left:1349px;top:42px;width:1px;height:709px;background:#707070"></div>
<div style="left:192px;top:222px;width:1157px;height:1px;background:#a0a0a0"></div>
<div style="left:192px;top:223px;width:1157px;height:1px;background:#ffff00"></div>
<div style="left:192px;top:224px;width:1157px;height:1px;background:#f4f4ff"></div>
<div style="left:192px;top:225px;width:1157px;height:1px;background:#a8a8c0"></div>
<div style="left:192px;top:226px;width:1157px;height:1px;background:#ffff00"></div>
<div style="left:192px;top:227px;width:1157px;height:1px;background:#ffffff"></div>
<div style="left:282px;top:222px;width:4px;height:6px;background:#ffff00"></div>
<div style="left:192px;top:228px;width:90px;height:213px;background:#fff;border-left:1px solid #707070;border-bottom:1px solid #808080;box-sizing:border-box"></div>
<div style="left:193px;top:228px;width:89px;height:16px;background:#f0f0f0"></div>
<div style="left:195px;top:243px;width:84px;height:196px;background:#fff;border:1px solid #e0e0e0;box-sizing:border-box"></div>
<div style="left:197px;top:246px;width:80px;height:192px;background:#efefef"></div>
<svg style="left:202px;top:229px" width="14" height="14"><path d="M7 7L2.55 2.55A6.3 6.3 0 0 1 11.45 2.55Z" fill="#00f000"/><path d="M7 7L11.45 2.55A6.3 6.3 0 0 1 13.3 7Z" fill="#2030c8"/><path d="M7 7L13.3 7A6.3 6.3 0 0 1 7 13.3Z" fill="#ffff00"/><path d="M7 7L7 13.3A6.3 6.3 0 0 1 2.55 2.55Z" fill="#ff0000"/><path d="M7 7L2.55 2.55M7 7L11.45 2.55M7 7H13.3M7 7V13.3" stroke="#000" stroke-width="1"/><circle cx="7" cy="7" r="6.3" fill="none" stroke="#000" stroke-width="1.1"/></svg>
<div style="left:215px;top:228px;width:32px;height:16px;overflow:hidden"><div class="t" style="left:7px;top:0;line-height:16px;font-size:13px"><span style="display:inline-block;transform:scaleX(0.846);transform-origin:left">構成</span></div></div>
<div style="left:246px;top:228px;width:18px;height:12px;background:#e8e8e8;border:1px solid #c8c8c8;box-sizing:border-box"></div>
<div style="left:263px;top:228px;width:18px;height:12px;background:#e8e8e8;border:1px solid #c8c8c8;box-sizing:border-box"></div>
<svg style="left:252px;top:230px" width="5" height="7"><path d="M4 0 L0 3.5 L4 7Z" fill="#000"/></svg>
<svg style="left:270px;top:229px" width="5" height="7"><path d="M0 0 L4 3.5 L0 7Z" fill="#000"/></svg>
<div style="left:226px;top:246px;width:1px;height:192px;background:#9090a0"></div>
<div style="left:227px;top:246px;width:1px;height:192px;background:#ffff00"></div>
<div style="left:228px;top:246px;width:1px;height:192px;background:#ffffff"></div>
<div style="left:229px;top:246px;width:2px;height:192px;background:#ffff00"></div>
<div style="left:231px;top:246px;width:1px;height:192px;background:#9090a0"></div>
<div style="left:261px;top:246px;width:1px;height:192px;background:#9090a0"></div>
<div style="left:262px;top:246px;width:1px;height:192px;background:#ffff00"></div>
<div style="left:263px;top:246px;width:1px;height:192px;background:#ffffff"></div>
<div style="left:264px;top:246px;width:2px;height:192px;background:#ffff00"></div>
<div style="left:266px;top:246px;width:1px;height:192px;background:#9090a0"></div>
<div style="left:197px;top:246px;width:29px;height:192px;overflow:hidden"><div class="t" style="left:0;top:0;font-size:13px;line-height:16px"><span style="display:inline-block;transform:scaleX(0.846);transform-origin:left">目構成</span></div><div class="t" style="left:-2px;top:64px;font-size:12px;line-height:14px"><span style="display:inline-block;transform:scaleX(0.952);transform-origin:left">k道:</span></div><svg style="left:23px;top:118px" width="6" height="12"><path d="M6 0 L0 6 L6 12Z" fill="#1e78d0"/></svg></div>
<div style="left:232px;top:246px;width:29px;height:192px;overflow:hidden"><div class="t" style="left:-1px;top:0;font-size:13px;line-height:16px;color:#5aa0a0"><span style="display:inline-block;transform:scaleX(0.846);transform-origin:left">目構成</span></div><div style="left:0;top:0;width:21px;height:192px;overflow:hidden"><div class="t" style="left:14px;top:64px;font-size:12px;line-height:14px"><span style="display:inline-block;transform:scaleX(0.917);transform-origin:left">賎</span></div><div class="t" style="left:13px;top:96px;font-size:12px;line-height:14px"><span style="display:inline-block;transform:scaleX(0.917);transform-origin:left">評</span></div><div class="t" style="left:-4px;top:118px;font-size:12px;line-height:14px"><span style="display:inline-block;transform:scaleX(0.846);transform-origin:left">の生鮮</span></div><div class="t" style="left:13px;top:133px;font-size:12px;line-height:14px"><span style="display:inline-block;transform:scaleX(0.917);transform-origin:left">大</span></div></div><svg style="left:23px;top:118px" width="6" height="12"><path d="M6 0 L0 6 L6 12Z" fill="#1e78d0"/></svg></div>
<div style="left:267px;top:246px;width:11px;height:192px;overflow:hidden"><div class="t" style="left:0;top:0;font-size:13px;line-height:16px;color:#3050b0"><span style="display:inline-block;transform:scaleX(0.846);transform-origin:left">構</span></div><div class="t" style="left:0;top:131px;font-size:12px;line-height:14px">:</div><svg style="left:4px;top:118px" width="6" height="12"><path d="M6 0 L0 6 L6 12Z" fill="#1e78d0"/></svg></div>
<div style="left:286px;top:228px;width:1063px;height:213px;background:#f0f0f0;border-left:1px solid #707070;box-sizing:border-box"></div>
<div style="left:287px;top:228px;width:104px;height:18px;background:#fff"></div>
<div style="left:391px;top:229px;width:109px;height:16px;background:#f0f0f0;border:1px dashed #c8c8c8;border-bottom:none;box-sizing:border-box"></div>
<div style="left:500px;top:229px;width:133px;height:16px;background:#f0f0f0;border:1px dashed #c8c8c8;border-bottom:none;box-sizing:border-box"></div>
<div style="left:633px;top:229px;width:130px;height:16px;background:#f0f0f0;border:1px dashed #c8c8c8;border-bottom:none;box-sizing:border-box"></div>
<svg style="left:295px;top:229px" width="16" height="14"><rect x="0.5" y="0.5" width="15" height="13" fill="#fff" stroke="#000"/><rect x="1" y="1" width="14" height="2" fill="#1030c0"/><path d="M2.5 5.5h2M5.5 5.5h2M8.5 5.5h2M11.5 5.5h2.5M2.5 7.5h2M5.5 7.5h2M8.5 7.5h2M11.5 7.5h2.5M2.5 9.5h2M5.5 9.5h2M8.5 9.5h2M11.5 9.5h2.5M2.5 11.5h2M5.5 11.5h2M8.5 11.5h2M11.5 11.5h2.5" stroke="#000" stroke-width="1.1"/></svg>
<div class="t" style="left:317px;top:228px;height:17px;line-height:17px;font-size:13px"><span style="display:inline-block;transform:scaleX(0.846);transform-origin:left">購入先総明細</span></div>
<svg style="left:396px;top:231px" width="14" height="14"><path d="M7 7L2.55 2.55A6.3 6.3 0 0 1 11.45 2.55Z" fill="#00f000"/><path d="M7 7L11.45 2.55A6.3 6.3 0 0 1 13.3 7Z" fill="#2030c8"/><path d="M7 7L13.3 7A6.3 6.3 0 0 1 7 13.3Z" fill="#ffff00"/><path d="M7 7L7 13.3A6.3 6.3 0 0 1 2.55 2.55Z" fill="#ff0000"/><path d="M7 7L2.55 2.55M7 7L11.45 2.55M7 7H13.3M7 7V13.3" stroke="#000" stroke-width="1"/><circle cx="7" cy="7" r="6.3" fill="none" stroke="#000" stroke-width="1.1"/></svg>
<div style="left:415px;top:229px;width:84px;height:16px;overflow:hidden"><div class="t" style="left:0;top:3px;line-height:17px;font-size:13px"><span style="display:inline-block;transform:scaleX(0.846);transform-origin:left">購入先費目構成</span></div></div>
<svg style="left:505px;top:232px" width="16" height="14"><rect x="0.5" y="0.5" width="15" height="13" fill="#fff" stroke="#000"/><rect x="1" y="1" width="14" height="2" fill="#1030c0"/><path d="M2.5 5.5h2M5.5 5.5h2M8.5 5.5h2M11.5 5.5h2.5M2.5 7.5h2M5.5 7.5h2M8.5 7.5h2M11.5 7.5h2.5M2.5 9.5h2M5.5 9.5h2M8.5 9.5h2M11.5 9.5h2.5M2.5 11.5h2M5.5 11.5h2M8.5 11.5h2M11.5 11.5h2.5" stroke="#000" stroke-width="1.1"/></svg>
<div style="left:527px;top:229px;width:104px;height:16px;overflow:hidden"><div class="t" style="left:0;top:3px;line-height:17px;font-size:13px"><span style="display:inline-block;transform:scaleX(0.846);transform-origin:left">購入先別費目別明細</span></div></div>
<svg style="left:639px;top:230px" width="17" height="16"><path d="M0 1H17M0 5H17M0 9H17" stroke="#909090" stroke-width="1"/><path d="M3 8L5 4L7 6.5L8.5 8L10.5 12L12.5 8L14.5 4.5L16 3" stroke="#1030c0" stroke-width="1.3" fill="none"/><path d="M3 11L5 7.5L7 9L8.5 9L10 7.5L11.5 4.5L13 6L14.5 5.5L16 4.5" stroke="#f00000" stroke-width="1.3" fill="none"/><path d="M2.5 0.5V12.5H17" stroke="#000" stroke-width="1.4" fill="none"/><path d="M1 3H2M1 7H2M1 11H2M2.5 13.5V15M6.5 13.5V15M10.5 13.5V15M14.5 13.5V15" stroke="#000" stroke-width="1"/></svg>
<div style="left:660px;top:229px;width:102px;height:16px;overflow:hidden"><div class="t" style="left:0;top:3px;line-height:17px;font-size:13px"><span style="display:inline-block;transform:scaleX(0.846);transform-origin:left">購入先支出類目推移</span></div></div>
<div style="left:287px;top:244px;width:1062px;height:197px;background:#fff;border-top:1px dashed #c8c8c8;box-sizing:border-box"></div>
<div style="left:291px;top:246px;width:1054px;height:23px;background:#cecd84"></div>
<div class="t" style="left:345px;top:247px;height:23px;line-height:23px;font-size:14px"><span style="display:inline-block;transform:scaleX(0.934);transform-origin:left">1／13 行</span></div>
<div class="t" style="left:768px;top:247px;height:23px;line-height:23px;font-size:14px"><span style="display:inline-block;transform:scaleX(0.699);transform-origin:left">ツルハドラッグ　音羽</span></div>
<svg style="left:1045px;top:251px" width="18" height="17"><path d="M0.5 0.5H7L9.5 3V12.5H0.5Z" fill="#fff" stroke="#000"/><path d="M2 3h3M2 5.5h5M2 8h5M2 10.5h3" stroke="#000" stroke-width="1.2"/><path d="M4 8.5H9V5L15.5 10.5L9 16V12.5H4Z" fill="#f00000" stroke="#600" stroke-width="0.7"/></svg>
<div class="t" style="left:1065px;top:247px;height:23px;line-height:23px;font-size:13px"><span style="display:inline-block;transform:scaleX(0.815);transform-origin:left">CSV出力</span></div>
<svg style="left:1132px;top:250px" width="18" height="17"><path d="M5.5 0.5H13L16.5 4V15.5H5.5Z" fill="#fff" stroke="#000"/><path d="M7 4h2M7 7h7M7 10h7M7 13h7" stroke="#000" stroke-width="1" stroke-dasharray="1.5 1"/><path d="M3 1L12 11" stroke="#000" stroke-width="3"/><path d="M3 1L12 11" stroke="#ffe000" stroke-width="1.4"/><path d="M0.5 9.5Q3 7 8 8L10 11L9 15.5H2Z" fill="#fff060" stroke="#000" stroke-width="0.8"/><path d="M0.5 9.5V15" stroke="#20c0e0" stroke-width="1.2"/></svg>
<div class="t" style="left:1153px;top:246px;height:23px;line-height:23px;font-size:13px"><span style="display:inline-block;transform:scaleX(0.781);transform-origin:left">呼出し</span></div>
<div class="t" style="left:1200px;top:246px;height:23px;line-height:23px;font-size:13px"><span style="display:inline-block;transform:scaleX(0.830);transform-origin:left">処理番号：906</span></div>
<div class="c" style="left:291px;top:268px;width:75px;height:17px;line-height:17px;padding-left:2px;color:#808080"><span style="display:inline-block;transform:scaleX(0.917);transform-origin:left">購入日</span></div>
<div style="left:366px;top:269px;width:1px;height:16px;background:#e8e8e8"></div>
<div class="c" style="left:366px;top:268px;width:54px;height:17px;line-height:17px;padding-left:2px;color:#808080"><span style="display:inline-block;transform:scaleX(0.917);transform-origin:left">処理番号</span></div>
<div style="left:420px;top:269px;width:1px;height:16px;background:#e8e8e8"></div>
<div class="c" style="left:420px;top:268px;width:18px;height:17px;line-height:17px;padding-left:2px;color:#808080"><span style="display:inline-block;transform:scaleX(0.917);transform-origin:left">行</span></div>
<div style="left:438px;top:269px;width:1px;height:16px;background:#e8e8e8"></div>
<div class="c" style="left:438px;top:268px;width:103px;height:17px;line-height:17px;padding-left:2px;color:#808080"><span style="display:inline-block;transform:scaleX(0.917);transform-origin:left">総目名</span></div>
<div style="left:541px;top:269px;width:1px;height:16px;background:#e8e8e8"></div>
<div class="c" style="left:541px;top:268px;width:103px;height:17px;line-height:17px;padding-left:2px;color:#808080"><span style="display:inline-block;transform:scaleX(0.917);transform-origin:left">類目名</span></div>
<div style="left:644px;top:269px;width:1px;height:16px;background:#e8e8e8"></div>
<div class="c" style="left:644px;top:268px;width:103px;height:17px;line-height:17px;padding-left:2px;color:#808080"><span style="display:inline-block;transform:scaleX(0.917);transform-origin:left">細目名</span></div>
<div style="left:747px;top:269px;width:1px;height:16px;background:#e8e8e8"></div>
<div class="c" style="left:747px;top:268px;width:216px;height:17px;line-height:17px;padding-left:2px;color:#808080"><span style="display:inline-block;transform:scaleX(0.794);transform-origin:left">内　容</span></div>
<div style="left:963px;top:269px;width:1px;height:16px;background:#e8e8e8"></div>
<div class="c" style="left:963px;top:268px;width:88px;height:17px;line-height:17px;padding-left:2px;color:#808080"><span style="display:inline-block;transform:scaleX(0.917);transform-origin:left">税抜額</span></div>
<div style="left:1051px;top:269px;width:1px;height:16px;background:#e8e8e8"></div>
<div class="c" style="left:1051px;top:268px;width:75px;height:17px;line-height:17px;padding-left:2px;color:#808080"><span style="display:inline-block;transform:scaleX(0.917);transform-origin:left">消費税額</span></div>
<div style="left:1126px;top:269px;width:1px;height:16px;background:#e8e8e8"></div>
<div class="c" style="left:1126px;top:268px;width:90px;height:17px;line-height:17px;padding-left:2px;color:#808080"><span style="display:inline-block;transform:scaleX(0.917);transform-origin:left">税込額</span></div>
<div style="left:1216px;top:269px;width:1px;height:16px;background:#e8e8e8"></div>
<div class="c" style="left:1216px;top:268px;width:48px;height:17px;line-height:17px;padding-left:2px;color:#808080"><span style="display:inline-block;transform:scaleX(0.917);transform-origin:left">消費税率</span></div>
<div style="left:1264px;top:269px;width:1px;height:16px;background:#e8e8e8"></div>
<div style="left:291px;top:285px;width:973px;height:18px;background:#00ff00"></div>
<div style="left:291px;top:303px;width:973px;height:1px;background:#e8e8e8"></div>
<div class="c" style="left:291px;top:285px;width:75px;height:19px;line-height:19px;padding-left:3px;font-size:13px">2019/10/06</div>
<div style="left:366px;top:285px;width:1px;height:19px;background:#e8e8e8"></div>
<div class="c" style="left:366px;top:285px;width:54px;height:19px;line-height:19px;text-align:right;padding-right:3px;font-size:13px">906</div>
<div style="left:420px;top:285px;width:1px;height:19px;background:#e8e8e8"></div>
<div class="c" style="left:420px;top:285px;width:18px;height:19px;line-height:19px;text-align:right;padding-right:3px;font-size:13px">1</div>
<div style="left:438px;top:285px;width:1px;height:19px;background:#e8e8e8"></div>
<div class="c" style="left:438px;top:285px;width:103px;height:19px;line-height:19px;padding-left:3px;font-size:13px"><span style="display:inline-block;transform:scaleX(0.846);transform-origin:left">嗜好品</span></div>
<div style="left:541px;top:285px;width:1px;height:19px;background:#e8e8e8"></div>
<div class="c" style="left:541px;top:285px;width:103px;height:19px;line-height:19px;padding-left:3px;font-size:13px"><span style="display:inline-block;transform:scaleX(0.846);transform-origin:left">菓子類</span></div>
<div style="left:644px;top:285px;width:1px;height:19px;background:#e8e8e8"></div>
<div class="c" style="left:644px;top:285px;width:103px;height:19px;line-height:19px;padding-left:3px;font-size:13px"><span style="display:inline-block;transform:scaleX(0.846);transform-origin:left">洋菓子</span></div>
<div style="left:747px;top:285px;width:1px;height:19px;background:#e8e8e8"></div>
<div class="c" style="left:747px;top:285px;width:216px;height:19px;line-height:19px;padding-left:3px;font-size:13px"><span style="display:inline-block;transform:scaleX(0.605);transform-origin:left">【軽】ベスト　ハードビスケット</span></div>
<div style="left:963px;top:285px;width:1px;height:19px;background:#e8e8e8"></div>
<div class="c" style="left:963px;top:285px;width:88px;height:19px;line-height:19px;text-align:right;padding-right:3px;font-size:13px">88</div>
<div style="left:1051px;top:285px;width:1px;height:19px;background:#e8e8e8"></div>
<div class="c" style="left:1051px;top:285px;width:75px;height:19px;line-height:19px;text-align:right;padding-right:3px;font-size:13px">7</div>
<div style="left:1126px;top:285px;width:1px;height:19px;background:#e8e8e8"></div>
<div class="c" style="left:1126px;top:285px;width:90px;height:19px;line-height:19px;text-align:right;padding-right:3px;font-size:13px">95</div>
<div style="left:1216px;top:285px;width:1px;height:19px;background:#e8e8e8"></div>
<div class="c" style="left:1216px;top:285px;width:48px;height:19px;line-height:19px;text-align:right;padding-right:3px;font-size:13px">8%</div>
<div style="left:1264px;top:285px;width:1px;height:19px;background:#e8e8e8"></div>
<div style="left:291px;top:322px;width:973px;height:1px;background:#e8e8e8"></div>
<div class="c" style="left:291px;top:304px;width:75px;height:19px;line-height:19px;padding-left:3px;font-size:13px">2019/10/06</div>
<div style="left:366px;top:304px;width:1px;height:19px;background:#e8e8e8"></div>
<div class="c" style="left:366px;top:304px;width:54px;height:19px;line-height:19px;text-align:right;padding-right:3px;font-size:13px">906</div>
<div style="left:420px;top:304px;width:1px;height:19px;background:#e8e8e8"></div>
<div class="c" style="left:420px;top:304px;width:18px;height:19px;line-height:19px;text-align:right;padding-right:3px;font-size:13px">2</div>
<div style="left:438px;top:304px;width:1px;height:19px;background:#e8e8e8"></div>
<div class="c" style="left:438px;top:304px;width:103px;height:19px;line-height:19px;padding-left:3px;font-size:13px"><span style="display:inline-block;transform:scaleX(0.733);transform-origin:left">食　料</span></div>
<div style="left:541px;top:304px;width:1px;height:19px;background:#e8e8e8"></div>
<div class="c" style="left:541px;top:304px;width:103px;height:19px;line-height:19px;padding-left:3px;font-size:13px"><span style="display:inline-block;transform:scaleX(0.846);transform-origin:left">惣菜等</span></div>
<div style="left:644px;top:304px;width:1px;height:19px;background:#e8e8e8"></div>
<div class="c" style="left:644px;top:304px;width:103px;height:19px;line-height:19px;padding-left:3px;font-size:13px"><span style="display:inline-block;transform:scaleX(0.564);transform-origin:left">チルド・レトルト・パウチ</span></div>
<div style="left:747px;top:304px;width:1px;height:19px;background:#e8e8e8"></div>
<div class="c" style="left:747px;top:304px;width:216px;height:19px;line-height:19px;padding-left:3px;font-size:13px"><span style="display:inline-block;transform:scaleX(0.659);transform-origin:left">【軽】丸大　チキンハンバーグ　3個Ｐ</span></div>
<div style="left:963px;top:304px;width:1px;height:19px;background:#e8e8e8"></div>
<div class="c" style="left:963px;top:304px;width:88px;height:19px;line-height:19px;text-align:right;padding-right:3px;font-size:13px">148</div>
<div style="left:1051px;top:304px;width:1px;height:19px;background:#e8e8e8"></div>
<div class="c" style="left:1051px;top:304px;width:75px;height:19px;line-height:19px;text-align:right;padding-right:3px;font-size:13px">11</div>
<div style="left:1126px;top:304px;width:1px;height:19px;background:#e8e8e8"></div>
<div class="c" style="left:1126px;top:304px;width:90px;height:19px;line-height:19px;text-align:right;padding-right:3px;font-size:13px">159</div>
<div style="left:1216px;top:304px;width:1px;height:19px;background:#e8e8e8"></div>
<div class="c" style="left:1216px;top:304px;width:48px;height:19px;line-height:19px;text-align:right;padding-right:3px;font-size:13px">8%</div>
<div style="left:1264px;top:304px;width:1px;height:19px;background:#e8e8e8"></div>
<div style="left:291px;top:341px;width:973px;height:1px;background:#e8e8e8"></div>
<div class="c" style="left:291px;top:323px;width:75px;height:19px;line-height:19px;padding-left:3px;font-size:13px">2019/10/06</div>
<div style="left:366px;top:323px;width:1px;height:19px;background:#e8e8e8"></div>
<div class="c" style="left:366px;top:323px;width:54px;height:19px;line-height:19px;text-align:right;padding-right:3px;font-size:13px">906</div>
<div style="left:420px;top:323px;width:1px;height:19px;background:#e8e8e8"></div>
<div class="c" style="left:420px;top:323px;width:18px;height:19px;line-height:19px;text-align:right;padding-right:3px;font-size:13px">3</div>
<div style="left:438px;top:323px;width:1px;height:19px;background:#e8e8e8"></div>
<div class="c" style="left:438px;top:323px;width:103px;height:19px;line-height:19px;padding-left:3px;font-size:13px"><span style="display:inline-block;transform:scaleX(0.733);transform-origin:left">食　料</span></div>
<div style="left:541px;top:323px;width:1px;height:19px;background:#e8e8e8"></div>
<div class="c" style="left:541px;top:323px;width:103px;height:19px;line-height:19px;padding-left:3px;font-size:13px"><span style="display:inline-block;transform:scaleX(0.846);transform-origin:left">惣菜等</span></div>
<div style="left:644px;top:323px;width:1px;height:19px;background:#e8e8e8"></div>
<div class="c" style="left:644px;top:323px;width:103px;height:19px;line-height:19px;padding-left:3px;font-size:13px"><span style="display:inline-block;transform:scaleX(0.564);transform-origin:left">チルド・レトルト・パウチ</span></div>
<div style="left:747px;top:323px;width:1px;height:19px;background:#e8e8e8"></div>
<div class="c" style="left:747px;top:323px;width:216px;height:19px;line-height:19px;padding-left:3px;font-size:13px"><span style="display:inline-block;transform:scaleX(0.661);transform-origin:left">【軽】ベストプライス　ビーフカレー辛口　200ｇ</span></div>
<div style="left:963px;top:323px;width:1px;height:19px;background:#e8e8e8"></div>
<div class="c" style="left:963px;top:323px;width:88px;height:19px;line-height:19px;text-align:right;padding-right:3px;font-size:13px">78</div>
<div style="left:1051px;top:323px;width:1px;height:19px;background:#e8e8e8"></div>
<div class="c" style="left:1051px;top:323px;width:75px;height:19px;line-height:19px;text-align:right;padding-right:3px;font-size:13px">6</div>
<div style="left:1126px;top:323px;width:1px;height:19px;background:#e8e8e8"></div>
<div class="c" style="left:1126px;top:323px;width:90px;height:19px;line-height:19px;text-align:right;padding-right:3px;font-size:13px">84</div>
<div style="left:1216px;top:323px;width:1px;height:19px;background:#e8e8e8"></div>
<div class="c" style="left:1216px;top:323px;width:48px;height:19px;line-height:19px;text-align:right;padding-right:3px;font-size:13px">8%</div>
<div style="left:1264px;top:323px;width:1px;height:19px;background:#e8e8e8"></div>
<div style="left:291px;top:360px;width:973px;height:1px;background:#e8e8e8"></div>
<div class="c" style="left:291px;top:342px;width:75px;height:19px;line-height:19px;padding-left:3px;font-size:13px">2019/10/06</div>
<div style="left:366px;top:342px;width:1px;height:19px;background:#e8e8e8"></div>
<div class="c" style="left:366px;top:342px;width:54px;height:19px;line-height:19px;text-align:right;padding-right:3px;font-size:13px">906</div>
<div style="left:420px;top:342px;width:1px;height:19px;background:#e8e8e8"></div>
<div class="c" style="left:420px;top:342px;width:18px;height:19px;line-height:19px;text-align:right;padding-right:3px;font-size:13px">4</div>
<div style="left:438px;top:342px;width:1px;height:19px;background:#e8e8e8"></div>
<div class="c" style="left:438px;top:342px;width:103px;height:19px;line-height:19px;padding-left:3px;font-size:13px"><span style="display:inline-block;transform:scaleX(0.733);transform-origin:left">食　料</span></div>
<div style="left:541px;top:342px;width:1px;height:19px;background:#e8e8e8"></div>
<div class="c" style="left:541px;top:342px;width:103px;height:19px;line-height:19px;padding-left:3px;font-size:13px"><span style="display:inline-block;transform:scaleX(0.846);transform-origin:left">調味料</span></div>
<div style="left:644px;top:342px;width:1px;height:19px;background:#e8e8e8"></div>
<div class="c" style="left:644px;top:342px;width:103px;height:19px;line-height:19px;padding-left:3px;font-size:13px"><span style="display:inline-block;transform:scaleX(0.607);transform-origin:left">ドレッシング・ソース類</span></div>
<div style="left:747px;top:342px;width:1px;height:19px;background:#e8e8e8"></div>
<div class="c" style="left:747px;top:342px;width:216px;height:19px;line-height:19px;padding-left:3px;font-size:13px"><span style="display:inline-block;transform:scaleX(0.690);transform-origin:left">【軽】理研　ノンオイル青じそ　190㎖</span></div>
<div style="left:963px;top:342px;width:1px;height:19px;background:#e8e8e8"></div>
<div class="c" style="left:963px;top:342px;width:88px;height:19px;line-height:19px;text-align:right;padding-right:3px;font-size:13px">198</div>
<div style="left:1051px;top:342px;width:1px;height:19px;background:#e8e8e8"></div>
<div class="c" style="left:1051px;top:342px;width:75px;height:19px;line-height:19px;text-align:right;padding-right:3px;font-size:13px">15</div>
<div style="left:1126px;top:342px;width:1px;height:19px;background:#e8e8e8"></div>
<div class="c" style="left:1126px;top:342px;width:90px;height:19px;line-height:19px;text-align:right;padding-right:3px;font-size:13px">213</div>
<div style="left:1216px;top:342px;width:1px;height:19px;background:#e8e8e8"></div>
<div class="c" style="left:1216px;top:342px;width:48px;height:19px;line-height:19px;text-align:right;padding-right:3px;font-size:13px">8%</div>
<div style="left:1264px;top:342px;width:1px;height:19px;background:#e8e8e8"></div>
<div style="left:291px;top:379px;width:973px;height:1px;background:#e8e8e8"></div>
<div class="c" style="left:291px;top:361px;width:75px;height:19px;line-height:19px;padding-left:3px;font-size:13px">2019/10/06</div>
<div style="left:366px;top:361px;width:1px;height:19px;background:#e8e8e8"></div>
<div class="c" style="left:366px;top:361px;width:54px;height:19px;line-height:19px;text-align:right;padding-right:3px;font-size:13px">906</div>
<div style="left:420px;top:361px;width:1px;height:19px;background:#e8e8e8"></div>
<div class="c" style="left:420px;top:361px;width:18px;height:19px;line-height:19px;text-align:right;padding-right:3px;font-size:13px">5</div>
<div style="left:438px;top:361px;width:1px;height:19px;background:#e8e8e8"></div>
<div class="c" style="left:438px;top:361px;width:103px;height:19px;line-height:19px;padding-left:3px;font-size:13px"><span style="display:inline-block;transform:scaleX(0.846);transform-origin:left">嗜好品</span></div>
<div style="left:541px;top:361px;width:1px;height:19px;background:#e8e8e8"></div>
<div class="c" style="left:541px;top:361px;width:103px;height:19px;line-height:19px;padding-left:3px;font-size:13px"><span style="display:inline-block;transform:scaleX(0.733);transform-origin:left">酒　類</span></div>
<div style="left:644px;top:361px;width:1px;height:19px;background:#e8e8e8"></div>
<div class="c" style="left:644px;top:361px;width:103px;height:19px;line-height:19px;padding-left:3px;font-size:13px"><span style="display:inline-block;transform:scaleX(0.708);transform-origin:left">ビール・発泡酒等</span></div>
<div style="left:747px;top:361px;width:1px;height:19px;background:#e8e8e8"></div>
<div class="c" style="left:747px;top:361px;width:216px;height:19px;line-height:19px;padding-left:3px;font-size:13px"><span style="display:inline-block;transform:scaleX(0.808);transform-origin:left">麦艶　350㎖Ｘ6缶</span></div>
<div style="left:963px;top:361px;width:1px;height:19px;background:#e8e8e8"></div>
<div class="c" style="left:963px;top:361px;width:88px;height:19px;line-height:19px;text-align:right;padding-right:3px;font-size:13px">440</div>
<div style="left:1051px;top:361px;width:1px;height:19px;background:#e8e8e8"></div>
<div class="c" style="left:1051px;top:361px;width:75px;height:19px;line-height:19px;text-align:right;padding-right:3px;font-size:13px">44</div>
<div style="left:1126px;top:361px;width:1px;height:19px;background:#e8e8e8"></div>
<div class="c" style="left:1126px;top:361px;width:90px;height:19px;line-height:19px;text-align:right;padding-right:3px;font-size:13px">484</div>
<div style="left:1216px;top:361px;width:1px;height:19px;background:#e8e8e8"></div>
<div class="c" style="left:1216px;top:361px;width:48px;height:19px;line-height:19px;text-align:right;padding-right:3px;font-size:13px">10%</div>
<div style="left:1264px;top:361px;width:1px;height:19px;background:#e8e8e8"></div>
<div style="left:291px;top:398px;width:973px;height:1px;background:#e8e8e8"></div>
<div class="c" style="left:291px;top:380px;width:75px;height:19px;line-height:19px;padding-left:3px;font-size:13px">2019/10/06</div>
<div style="left:366px;top:380px;width:1px;height:19px;background:#e8e8e8"></div>
<div class="c" style="left:366px;top:380px;width:54px;height:19px;line-height:19px;text-align:right;padding-right:3px;font-size:13px">906</div>
<div style="left:420px;top:380px;width:1px;height:19px;background:#e8e8e8"></div>
<div class="c" style="left:420px;top:380px;width:18px;height:19px;line-height:19px;text-align:right;padding-right:3px;font-size:13px">6</div>
<div style="left:438px;top:380px;width:1px;height:19px;background:#e8e8e8"></div>
<div class="c" style="left:438px;top:380px;width:103px;height:19px;line-height:19px;padding-left:3px;font-size:13px"><span style="display:inline-block;transform:scaleX(0.733);transform-origin:left">食　料</span></div>
<div style="left:541px;top:380px;width:1px;height:19px;background:#e8e8e8"></div>
<div class="c" style="left:541px;top:380px;width:103px;height:19px;line-height:19px;padding-left:3px;font-size:13px"><span style="display:inline-block;transform:scaleX(0.781);transform-origin:left">値引き</span></div>
<div style="left:644px;top:380px;width:1px;height:19px;background:#e8e8e8"></div>
<div class="c" style="left:644px;top:380px;width:103px;height:19px;line-height:19px;padding-left:3px;font-size:13px"></div>
<div style="left:747px;top:380px;width:1px;height:19px;background:#e8e8e8"></div>
<div class="c" style="left:747px;top:380px;width:216px;height:19px;line-height:19px;padding-left:3px;font-size:13px"><span style="display:inline-block;transform:scaleX(0.737);transform-origin:left">【軽】500円割引クーポン　按分</span></div>
<div style="left:963px;top:380px;width:1px;height:19px;background:#e8e8e8"></div>
<div class="c" style="left:963px;top:380px;width:88px;height:19px;line-height:19px;text-align:right;padding-right:3px;font-size:13px">-247</div>
<div style="left:1051px;top:380px;width:1px;height:19px;background:#e8e8e8"></div>
<div class="c" style="left:1051px;top:380px;width:75px;height:19px;line-height:19px;text-align:right;padding-right:3px;font-size:13px">-19</div>
<div style="left:1126px;top:380px;width:1px;height:19px;background:#e8e8e8"></div>
<div class="c" style="left:1126px;top:380px;width:90px;height:19px;line-height:19px;text-align:right;padding-right:3px;font-size:13px">-266</div>
<div style="left:1216px;top:380px;width:1px;height:19px;background:#e8e8e8"></div>
<div class="c" style="left:1216px;top:380px;width:48px;height:19px;line-height:19px;text-align:right;padding-right:3px;font-size:13px">8%</div>
<div style="left:1264px;top:380px;width:1px;height:19px;background:#e8e8e8"></div>
<div style="left:291px;top:417px;width:973px;height:1px;background:#e8e8e8"></div>
<div class="c" style="left:291px;top:399px;width:75px;height:19px;line-height:19px;padding-left:3px;font-size:13px">2019/10/06</div>
<div style="left:366px;top:399px;width:1px;height:19px;background:#e8e8e8"></div>
<div class="c" style="left:366px;top:399px;width:54px;height:19px;line-height:19px;text-align:right;padding-right:3px;font-size:13px">906</div>
<div style="left:420px;top:399px;width:1px;height:19px;background:#e8e8e8"></div>
<div class="c" style="left:420px;top:399px;width:18px;height:19px;line-height:19px;text-align:right;padding-right:3px;font-size:13px">7</div>
<div style="left:438px;top:399px;width:1px;height:19px;background:#e8e8e8"></div>
<div class="c" style="left:438px;top:399px;width:103px;height:19px;line-height:19px;padding-left:3px;font-size:13px"><span style="display:inline-block;transform:scaleX(0.846);transform-origin:left">嗜好品</span></div>
<div style="left:541px;top:399px;width:1px;height:19px;background:#e8e8e8"></div>
<div class="c" style="left:541px;top:399px;width:103px;height:19px;line-height:19px;padding-left:3px;font-size:13px"><span style="display:inline-block;transform:scaleX(0.781);transform-origin:left">値引き</span></div>
<div style="left:644px;top:399px;width:1px;height:19px;background:#e8e8e8"></div>
<div class="c" style="left:644px;top:399px;width:103px;height:19px;line-height:19px;padding-left:3px;font-size:13px"></div>
<div style="left:747px;top:399px;width:1px;height:19px;background:#e8e8e8"></div>
<div class="c" style="left:747px;top:399px;width:216px;height:19px;line-height:19px;padding-left:3px;font-size:13px"><span style="display:inline-block;transform:scaleX(0.737);transform-origin:left">【軽】500円割引クーポン　按分</span></div>
<div style="left:963px;top:399px;width:1px;height:19px;background:#e8e8e8"></div>
<div class="c" style="left:963px;top:399px;width:88px;height:19px;line-height:19px;text-align:right;padding-right:3px;font-size:13px">-217</div>
<div style="left:1051px;top:399px;width:1px;height:19px;background:#e8e8e8"></div>
<div class="c" style="left:1051px;top:399px;width:75px;height:19px;line-height:19px;text-align:right;padding-right:3px;font-size:13px">-17</div>
<div style="left:1126px;top:399px;width:1px;height:19px;background:#e8e8e8"></div>
<div class="c" style="left:1126px;top:399px;width:90px;height:19px;line-height:19px;text-align:right;padding-right:3px;font-size:13px">-234</div>
<div style="left:1216px;top:399px;width:1px;height:19px;background:#e8e8e8"></div>
<div class="c" style="left:1216px;top:399px;width:48px;height:19px;line-height:19px;text-align:right;padding-right:3px;font-size:13px">8%</div>
<div style="left:1264px;top:399px;width:1px;height:19px;background:#e8e8e8"></div>
<div style="left:291px;top:436px;width:973px;height:1px;background:#e8e8e8"></div>
<div class="c" style="left:291px;top:418px;width:75px;height:19px;line-height:19px;padding-left:3px;font-size:13px">2019/10/10</div>
<div style="left:366px;top:418px;width:1px;height:19px;background:#e8e8e8"></div>
<div class="c" style="left:366px;top:418px;width:54px;height:19px;line-height:19px;text-align:right;padding-right:3px;font-size:13px">909</div>
<div style="left:420px;top:418px;width:1px;height:19px;background:#e8e8e8"></div>
<div class="c" style="left:420px;top:418px;width:18px;height:19px;line-height:19px;text-align:right;padding-right:3px;font-size:13px">1</div>
<div style="left:438px;top:418px;width:1px;height:19px;background:#e8e8e8"></div>
<div class="c" style="left:438px;top:418px;width:103px;height:19px;line-height:19px;padding-left:3px;font-size:13px"><span style="display:inline-block;transform:scaleX(0.733);transform-origin:left">食　料</span></div>
<div style="left:541px;top:418px;width:1px;height:19px;background:#e8e8e8"></div>
<div class="c" style="left:541px;top:418px;width:103px;height:19px;line-height:19px;padding-left:3px;font-size:13px"><span style="display:inline-block;transform:scaleX(0.846);transform-origin:left">乳製品</span></div>
<div style="left:644px;top:418px;width:1px;height:19px;background:#e8e8e8"></div>
<div class="c" style="left:644px;top:418px;width:103px;height:19px;line-height:19px;padding-left:3px;font-size:13px"><span style="display:inline-block;transform:scaleX(0.733);transform-origin:left">牛　乳</span></div>
<div style="left:747px;top:418px;width:1px;height:19px;background:#e8e8e8"></div>
<div class="c" style="left:747px;top:418px;width:216px;height:19px;line-height:19px;padding-left:3px;font-size:13px"><span style="display:inline-block;transform:scaleX(0.721);transform-origin:left">【軽】まきばの恵み　1000㎖　3点</span></div>
<div style="left:963px;top:418px;width:1px;height:19px;background:#e8e8e8"></div>
<div class="c" style="left:963px;top:418px;width:88px;height:19px;line-height:19px;text-align:right;padding-right:3px;font-size:13px">473</div>
<div style="left:1051px;top:418px;width:1px;height:19px;background:#e8e8e8"></div>
<div class="c" style="left:1051px;top:418px;width:75px;height:19px;line-height:19px;text-align:right;padding-right:3px;font-size:13px">37</div>
<div style="left:1126px;top:418px;width:1px;height:19px;background:#e8e8e8"></div>
<div class="c" style="left:1126px;top:418px;width:90px;height:19px;line-height:19px;text-align:right;padding-right:3px;font-size:13px">510</div>
<div style="left:1216px;top:418px;width:1px;height:19px;background:#e8e8e8"></div>
<div class="c" style="left:1216px;top:418px;width:48px;height:19px;line-height:19px;text-align:right;padding-right:3px;font-size:13px">8%</div>
<div style="left:1264px;top:418px;width:1px;height:19px;background:#e8e8e8"></div>
<div style="left:1329px;top:269px;width:16px;height:168px;background:#f0f0f0"></div>
<div style="left:1329px;top:286px;width:16px;height:49px;background:#cdcdcd"></div>
<svg style="position:absolute;left:1332px;top:274px" width="10" height="6"><path d="M1 5 L5 1 L9 5" stroke="#606060" stroke-width="1.6" fill="none"/></svg>
<svg style="position:absolute;left:1332px;top:425px" width="10" height="6"><path d="M1 1 L5 5 L9 1" stroke="#606060" stroke-width="1.6" fill="none"/></svg>
<div style="left:287px;top:439px;width:1062px;height:1px;background:#d0d0d0"></div>
<div style="left:192px;top:441px;width:1157px;height:1px;background:#808080"></div>
<div style="left:192px;top:442px;width:1157px;height:1px;background:#ffff00"></div>
<div style="left:192px;top:443px;width:1157px;height:1px;background:#ffff00"></div>
<div style="left:192px;top:444px;width:1157px;height:1px;background:#ffff00"></div>
<div style="left:192px;top:445px;width:1157px;height:1px;background:#ffff00"></div>
<div style="left:192px;top:446px;width:1157px;height:1px;background:#808080"></div>
<div style="left:192px;top:447px;width:1157px;height:304px;background:#f0f0f0;border-left:1px solid #707070;border-bottom:1px solid #707070;box-sizing:border-box"></div>
<div style="left:193px;top:447px;width:92px;height:18px;background:#fff"></div>
<div style="left:285px;top:448px;width:110px;height:16px;background:#f0f0f0;border:1px dashed #c8c8c8;border-bottom:none;box-sizing:border-box"></div>
<div style="left:395px;top:448px;width:99px;height:16px;background:#f0f0f0;border:1px dashed #c8c8c8;border-bottom:none;box-sizing:border-box"></div>
<div style="left:494px;top:448px;width:98px;height:16px;background:#f0f0f0;border:1px dashed #c8c8c8;border-bottom:none;box-sizing:border-box"></div>
<svg style="left:201px;top:449px" width="16" height="14"><rect x="0.5" y="0.5" width="15" height="13" fill="#fff" stroke="#000"/><rect x="1" y="1" width="14" height="2" fill="#1030c0"/><path d="M2.5 5.5h2M5.5 5.5h2M8.5 5.5h2M11.5 5.5h2.5M2.5 7.5h2M5.5 7.5h2M8.5 7.5h2M11.5 7.5h2.5M2.5 9.5h2M5.5 9.5h2M8.5 9.5h2M11.5 9.5h2.5M2.5 11.5h2M5.5 11.5h2M8.5 11.5h2M11.5 11.5h2.5" stroke="#000" stroke-width="1.1"/></svg>
<div class="t" style="left:223px;top:447px;height:17px;line-height:17px;font-size:13px"><span style="display:inline-block;transform:scaleX(0.846);transform-origin:left">全購入明細</span></div>
<svg style="left:290px;top:450px" width="16" height="14"><rect x="0.5" y="0.5" width="15" height="13" fill="#fff" stroke="#000"/><rect x="1" y="1" width="14" height="2" fill="#1030c0"/><path d="M2.5 5.5h2M5.5 5.5h2M8.5 5.5h2M11.5 5.5h2.5M2.5 7.5h2M5.5 7.5h2M8.5 7.5h2M11.5 7.5h2.5M2.5 9.5h2M5.5 9.5h2M8.5 9.5h2M11.5 9.5h2.5M2.5 11.5h2M5.5 11.5h2M8.5 11.5h2M11.5 11.5h2.5" stroke="#000" stroke-width="1.1"/></svg>
<div style="left:312px;top:448px;width:82px;height:16px;overflow:hidden"><div class="t" style="left:0;top:3px;line-height:17px;font-size:13px"><span style="display:inline-block;transform:scaleX(0.846);transform-origin:left">費目別購入明細</span></div></div>
<svg style="left:401px;top:449px" width="17" height="16"><path d="M0 1H17M0 5H17M0 9H17" stroke="#909090" stroke-width="1"/><path d="M9.5 1V12" stroke="#1030c0" stroke-width="1.3"/><path d="M3 10.5L5 10L7 7L9 4.5L10.5 4.5L12.5 7L14.5 10L16 10.5" stroke="#f00000" stroke-width="1.3" fill="none"/><path d="M2.5 0.5V12.5H17" stroke="#000" stroke-width="1.4" fill="none"/><path d="M1 3H2M1 7H2M1 11H2M2.5 13.5V15M6.5 13.5V15M10.5 13.5V15M14.5 13.5V15" stroke="#000" stroke-width="1"/></svg>
<div style="left:425px;top:448px;width:68px;height:16px;overflow:hidden"><div class="t" style="left:0;top:3px;line-height:17px;font-size:13px"><span style="display:inline-block;transform:scaleX(0.846);transform-origin:left">支出類目推移</span></div></div>
<svg style="left:501px;top:449px" width="17" height="16"><path d="M0 1H17M0 5H17M0 9H17" stroke="#909090" stroke-width="1"/><path d="M3 8L5 4L7 6.5L8.5 8L10.5 12L12.5 8L14.5 4.5L16 3" stroke="#1030c0" stroke-width="1.3" fill="none"/><path d="M3 11L5 7.5L7 9L8.5 9L10 7.5L11.5 4.5L13 6L14.5 5.5L16 4.5" stroke="#f00000" stroke-width="1.3" fill="none"/><path d="M2.5 0.5V12.5H17" stroke="#000" stroke-width="1.4" fill="none"/><path d="M1 3H2M1 7H2M1 11H2M2.5 13.5V15M6.5 13.5V15M10.5 13.5V15M14.5 13.5V15" stroke="#000" stroke-width="1"/></svg>
<div style="left:523px;top:448px;width:68px;height:16px;overflow:hidden"><div class="t" style="left:0;top:3px;line-height:17px;font-size:13px"><span style="display:inline-block;transform:scaleX(0.846);transform-origin:left">費目別目推移</span></div></div>
<div style="left:193px;top:463px;width:1156px;height:287px;background:#fff;border-top:1px dashed #c8c8c8;box-sizing:border-box"></div>
<div style="left:197px;top:465px;width:1148px;height:23px;background:#f8c674"></div>
<div class="t" style="left:252px;top:466px;height:23px;line-height:23px;font-size:14px"><span style="display:inline-block;transform:scaleX(0.934);transform-origin:left">1／61 行</span></div>
<div class="t" style="left:629px;top:466px;height:23px;line-height:23px;font-size:14px"><span style="display:inline-block;transform:scaleX(0.908);transform-origin:left">自2019年10月1日　至2019年10月31日　情報全覧</span></div>
<svg style="left:1071px;top:470px" width="18" height="17"><path d="M0.5 0.5H7L9.5 3V12.5H0.5Z" fill="#fff" stroke="#000"/><path d="M2 3h3M2 5.5h5M2 8h5M2 10.5h3" stroke="#000" stroke-width="1.2"/><path d="M4 8.5H9V5L15.5 10.5L9 16V12.5H4Z" fill="#f00000" stroke="#600" stroke-width="0.7"/></svg>
<div class="t" style="left:1091px;top:465px;height:23px;line-height:23px;font-size:13px"><span style="display:inline-block;transform:scaleX(0.815);transform-origin:left">CSV出力</span></div>
<svg style="left:1159px;top:469px" width="18" height="17"><path d="M5.5 0.5H13L16.5 4V15.5H5.5Z" fill="#fff" stroke="#000"/><path d="M7 4h2M7 7h7M7 10h7M7 13h7" stroke="#000" stroke-width="1" stroke-dasharray="1.5 1"/><path d="M3 1L12 11" stroke="#000" stroke-width="3"/><path d="M3 1L12 11" stroke="#ffe000" stroke-width="1.4"/><path d="M0.5 9.5Q3 7 8 8L10 11L9 15.5H2Z" fill="#fff060" stroke="#000" stroke-width="0.8"/><path d="M0.5 9.5V15" stroke="#20c0e0" stroke-width="1.2"/></svg>
<div class="t" style="left:1180px;top:465px;height:23px;line-height:23px;font-size:13px"><span style="display:inline-block;transform:scaleX(0.781);transform-origin:left">呼出し</span></div>
<div class="t" style="left:1226px;top:465px;height:23px;line-height:23px;font-size:13px"><span style="display:inline-block;transform:scaleX(0.830);transform-origin:left">処理番号：903</span></div>
<div class="c" style="left:197px;top:487px;width:60px;height:17px;line-height:17px;padding-left:2px;color:#808080"><span style="display:inline-block;transform:scaleX(0.917);transform-origin:left">購入日</span></div>
<div style="left:257px;top:488px;width:1px;height:16px;background:#e8e8e8"></div>
<div class="c" style="left:257px;top:487px;width:54px;height:17px;line-height:17px;padding-left:2px;color:#808080"><span style="display:inline-block;transform:scaleX(0.917);transform-origin:left">処理番号</span></div>
<div style="left:311px;top:488px;width:1px;height:16px;background:#e8e8e8"></div>
<div class="c" style="left:311px;top:487px;width:20px;height:17px;line-height:17px;padding-left:2px;color:#808080"><span style="display:inline-block;transform:scaleX(0.917);transform-origin:left">行</span></div>
<div style="left:331px;top:488px;width:1px;height:16px;background:#e8e8e8"></div>
<div class="c" style="left:331px;top:487px;width:102px;height:17px;line-height:17px;padding-left:2px;color:#808080"><span style="display:inline-block;transform:scaleX(0.917);transform-origin:left">総目名</span></div>
<div style="left:433px;top:488px;width:1px;height:16px;background:#e8e8e8"></div>
<div class="c" style="left:433px;top:487px;width:103px;height:17px;line-height:17px;padding-left:2px;color:#808080"><span style="display:inline-block;transform:scaleX(0.917);transform-origin:left">類目名</span></div>
<div style="left:536px;top:488px;width:1px;height:16px;background:#e8e8e8"></div>
<div class="c" style="left:536px;top:487px;width:103px;height:17px;line-height:17px;padding-left:2px;color:#808080"><span style="display:inline-block;transform:scaleX(0.917);transform-origin:left">細目名</span></div>
<div style="left:639px;top:488px;width:1px;height:16px;background:#e8e8e8"></div>
<div class="c" style="left:639px;top:487px;width:216px;height:17px;line-height:17px;padding-left:2px;color:#808080"><span style="display:inline-block;transform:scaleX(0.874);transform-origin:left">買い物内容</span></div>
<div style="left:855px;top:488px;width:1px;height:16px;background:#e8e8e8"></div>
<div class="c" style="left:855px;top:487px;width:82px;height:17px;line-height:17px;padding-left:2px;color:#808080"><span style="display:inline-block;transform:scaleX(0.889);transform-origin:left">金額(税抜き)</span></div>
<div style="left:937px;top:488px;width:1px;height:16px;background:#e8e8e8"></div>
<div class="c" style="left:937px;top:487px;width:75px;height:17px;line-height:17px;padding-left:2px;color:#808080"><span style="display:inline-block;transform:scaleX(0.917);transform-origin:left">消費税額</span></div>
<div style="left:1012px;top:488px;width:1px;height:16px;background:#e8e8e8"></div>
<div class="c" style="left:1012px;top:487px;width:82px;height:17px;line-height:17px;padding-left:2px;color:#808080"><span style="display:inline-block;transform:scaleX(0.929);transform-origin:left">金額(税込)</span></div>
<div style="left:1094px;top:488px;width:1px;height:16px;background:#e8e8e8"></div>
<div class="c" style="left:1094px;top:487px;width:48px;height:17px;line-height:17px;padding-left:2px;color:#808080"><span style="display:inline-block;transform:scaleX(0.917);transform-origin:left">消費税率</span></div>
<div style="left:1142px;top:488px;width:1px;height:16px;background:#e8e8e8"></div>
<div class="c" style="left:1142px;top:487px;width:180px;height:17px;line-height:17px;padding-left:2px;color:#808080"><span style="display:inline-block;transform:scaleX(0.917);transform-origin:left">購入先</span></div>
<div style="left:1322px;top:488px;width:1px;height:16px;background:#e8e8e8"></div>
<div style="left:197px;top:504px;width:1125px;height:18px;background:#00ff00"></div>
<div style="left:197px;top:522px;width:1125px;height:1px;background:#e8e8e8"></div>
<div class="c" style="left:197px;top:504px;width:60px;height:19px;line-height:19px;padding-left:3px;font-size:13px">19/10/02</div>
<div style="left:257px;top:504px;width:1px;height:19px;background:#e8e8e8"></div>
<div class="c" style="left:257px;top:504px;width:54px;height:19px;line-height:19px;text-align:right;padding-right:3px;font-size:13px">903</div>
<div style="left:311px;top:504px;width:1px;height:19px;background:#e8e8e8"></div>
<div class="c" style="left:311px;top:504px;width:20px;height:19px;line-height:19px;text-align:right;padding-right:3px;font-size:13px">1</div>
<div style="left:331px;top:504px;width:1px;height:19px;background:#e8e8e8"></div>
<div class="c" style="left:331px;top:504px;width:102px;height:19px;line-height:19px;padding-left:3px;font-size:13px"><span style="display:inline-block;transform:scaleX(0.733);transform-origin:left">食　料</span></div>
<div style="left:433px;top:504px;width:1px;height:19px;background:#e8e8e8"></div>
<div class="c" style="left:433px;top:504px;width:103px;height:19px;line-height:19px;padding-left:3px;font-size:13px"><span style="display:inline-block;transform:scaleX(0.773);transform-origin:left">その他の生鮮食品</span></div>
<div style="left:536px;top:504px;width:1px;height:19px;background:#e8e8e8"></div>
<div class="c" style="left:536px;top:504px;width:103px;height:19px;line-height:19px;padding-left:3px;font-size:13px"><span style="display:inline-block;transform:scaleX(0.733);transform-origin:left">鶏　卵</span></div>
<div style="left:639px;top:504px;width:1px;height:19px;background:#e8e8e8"></div>
<div class="c" style="left:639px;top:504px;width:216px;height:19px;line-height:19px;padding-left:3px;font-size:13px"><span style="display:inline-block;transform:scaleX(0.682);transform-origin:left">【軽】どさんこ恵みたまご　10個Ｐ</span></div>
<div style="left:855px;top:504px;width:1px;height:19px;background:#e8e8e8"></div>
<div class="c" style="left:855px;top:504px;width:82px;height:19px;line-height:19px;text-align:right;padding-right:3px;font-size:13px">135</div>
<div style="left:937px;top:504px;width:1px;height:19px;background:#e8e8e8"></div>
<div class="c" style="left:937px;top:504px;width:75px;height:19px;line-height:19px;text-align:right;padding-right:3px;font-size:13px">10</div>
<div style="left:1012px;top:504px;width:1px;height:19px;background:#e8e8e8"></div>
<div class="c" style="left:1012px;top:504px;width:82px;height:19px;line-height:19px;text-align:right;padding-right:3px;font-size:13px">145</div>
<div style="left:1094px;top:504px;width:1px;height:19px;background:#e8e8e8"></div>
<div class="c" style="left:1094px;top:504px;width:48px;height:19px;line-height:19px;text-align:right;padding-right:3px;font-size:13px">8.0%</div>
<div style="left:1142px;top:504px;width:1px;height:19px;background:#e8e8e8"></div>
<div class="c" style="left:1142px;top:504px;width:180px;height:19px;line-height:19px;padding-left:3px;font-size:13px"><span style="display:inline-block;transform:scaleX(0.636);transform-origin:left">ツルハドラッグ　住吉</span></div>
<div style="left:1322px;top:504px;width:1px;height:19px;background:#e8e8e8"></div>
<div style="left:197px;top:541px;width:1125px;height:1px;background:#e8e8e8"></div>
<div class="c" style="left:197px;top:523px;width:60px;height:19px;line-height:19px;padding-left:3px;font-size:13px">19/10/02</div>
<div style="left:257px;top:523px;width:1px;height:19px;background:#e8e8e8"></div>
<div class="c" style="left:257px;top:523px;width:54px;height:19px;line-height:19px;text-align:right;padding-right:3px;font-size:13px">903</div>
<div style="left:311px;top:523px;width:1px;height:19px;background:#e8e8e8"></div>
<div class="c" style="left:311px;top:523px;width:20px;height:19px;line-height:19px;text-align:right;padding-right:3px;font-size:13px">2</div>
<div style="left:331px;top:523px;width:1px;height:19px;background:#e8e8e8"></div>
<div class="c" style="left:331px;top:523px;width:102px;height:19px;line-height:19px;padding-left:3px;font-size:13px"><span style="display:inline-block;transform:scaleX(0.733);transform-origin:left">食　料</span></div>
<div style="left:433px;top:523px;width:1px;height:19px;background:#e8e8e8"></div>
<div class="c" style="left:433px;top:523px;width:103px;height:19px;line-height:19px;padding-left:3px;font-size:13px"><span style="display:inline-block;transform:scaleX(0.697);transform-origin:left">穀類・いも類</span></div>
<div style="left:536px;top:523px;width:1px;height:19px;background:#e8e8e8"></div>
<div class="c" style="left:536px;top:523px;width:103px;height:19px;line-height:19px;padding-left:3px;font-size:13px"><span style="display:inline-block;transform:scaleX(0.575);transform-origin:left">パ　ン</span></div>
<div style="left:639px;top:523px;width:1px;height:19px;background:#e8e8e8"></div>
<div class="c" style="left:639px;top:523px;width:216px;height:19px;line-height:19px;padding-left:3px;font-size:13px"><span style="display:inline-block;transform:scaleX(0.649);transform-origin:left">【軽】食パン　ボンジョルノ　6枚切り</span></div>
<div style="left:855px;top:523px;width:1px;height:19px;background:#e8e8e8"></div>
<div class="c" style="left:855px;top:523px;width:82px;height:19px;line-height:19px;text-align:right;padding-right:3px;font-size:13px">78</div>
<div style="left:937px;top:523px;width:1px;height:19px;background:#e8e8e8"></div>
<div class="c" style="left:937px;top:523px;width:75px;height:19px;line-height:19px;text-align:right;padding-right:3px;font-size:13px">6</div>
<div style="left:1012px;top:523px;width:1px;height:19px;background:#e8e8e8"></div>
<div class="c" style="left:1012px;top:523px;width:82px;height:19px;line-height:19px;text-align:right;padding-right:3px;font-size:13px">84</div>
<div style="left:1094px;top:523px;width:1px;height:19px;background:#e8e8e8"></div>
<div class="c" style="left:1094px;top:523px;width:48px;height:19px;line-height:19px;text-align:right;padding-right:3px;font-size:13px">8.0%</div>
<div style="left:1142px;top:523px;width:1px;height:19px;background:#e8e8e8"></div>
<div class="c" style="left:1142px;top:523px;width:180px;height:19px;line-height:19px;padding-left:3px;font-size:13px"><span style="display:inline-block;transform:scaleX(0.636);transform-origin:left">ツルハドラッグ　住吉</span></div>
<div style="left:1322px;top:523px;width:1px;height:19px;background:#e8e8e8"></div>
<div style="left:197px;top:560px;width:1125px;height:1px;background:#e8e8e8"></div>
<div class="c" style="left:197px;top:542px;width:60px;height:19px;line-height:19px;padding-left:3px;font-size:13px">19/10/02</div>
<div style="left:257px;top:542px;width:1px;height:19px;background:#e8e8e8"></div>
<div class="c" style="left:257px;top:542px;width:54px;height:19px;line-height:19px;text-align:right;padding-right:3px;font-size:13px">903</div>
<div style="left:311px;top:542px;width:1px;height:19px;background:#e8e8e8"></div>
<div class="c" style="left:311px;top:542px;width:20px;height:19px;line-height:19px;text-align:right;padding-right:3px;font-size:13px">3</div>
<div style="left:331px;top:542px;width:1px;height:19px;background:#e8e8e8"></div>
<div class="c" style="left:331px;top:542px;width:102px;height:19px;line-height:19px;padding-left:3px;font-size:13px"><span style="display:inline-block;transform:scaleX(0.733);transform-origin:left">食　料</span></div>
<div style="left:433px;top:542px;width:1px;height:19px;background:#e8e8e8"></div>
<div class="c" style="left:433px;top:542px;width:103px;height:19px;line-height:19px;padding-left:3px;font-size:13px"><span style="display:inline-block;transform:scaleX(0.846);transform-origin:left">惣菜等</span></div>
<div style="left:536px;top:542px;width:1px;height:19px;background:#e8e8e8"></div>
<div class="c" style="left:536px;top:542px;width:103px;height:19px;line-height:19px;padding-left:3px;font-size:13px"><span style="display:inline-block;transform:scaleX(0.564);transform-origin:left">チルド・レトルト・パウチ</span></div>
<div style="left:639px;top:542px;width:1px;height:19px;background:#e8e8e8"></div>
<div class="c" style="left:639px;top:542px;width:216px;height:19px;line-height:19px;padding-left:3px;font-size:13px"><span style="display:inline-block;transform:scaleX(0.723);transform-origin:left">【軽】楽陽食品　チルド肉餃子</span></div>
<div style="left:855px;top:542px;width:1px;height:19px;background:#e8e8e8"></div>
<div class="c" style="left:855px;top:542px;width:82px;height:19px;line-height:19px;text-align:right;padding-right:3px;font-size:13px">88</div>
<div style="left:937px;top:542px;width:1px;height:19px;background:#e8e8e8"></div>
<div class="c" style="left:937px;top:542px;width:75px;height:19px;line-height:19px;text-align:right;padding-right:3px;font-size:13px">7</div>
<div style="left:1012px;top:542px;width:1px;height:19px;background:#e8e8e8"></div>
<div class="c" style="left:1012px;top:542px;width:82px;height:19px;line-height:19px;text-align:right;padding-right:3px;font-size:13px">95</div>
<div style="left:1094px;top:542px;width:1px;height:19px;background:#e8e8e8"></div>
<div class="c" style="left:1094px;top:542px;width:48px;height:19px;line-height:19px;text-align:right;padding-right:3px;font-size:13px">8.0%</div>
<div style="left:1142px;top:542px;width:1px;height:19px;background:#e8e8e8"></div>
<div class="c" style="left:1142px;top:542px;width:180px;height:19px;line-height:19px;padding-left:3px;font-size:13px"><span style="display:inline-block;transform:scaleX(0.636);transform-origin:left">ツルハドラッグ　住吉</span></div>
<div style="left:1322px;top:542px;width:1px;height:19px;background:#e8e8e8"></div>
<div style="left:197px;top:579px;width:1125px;height:1px;background:#e8e8e8"></div>
<div class="c" style="left:197px;top:561px;width:60px;height:19px;line-height:19px;padding-left:3px;font-size:13px">19/10/02</div>
<div style="left:257px;top:561px;width:1px;height:19px;background:#e8e8e8"></div>
<div class="c" style="left:257px;top:561px;width:54px;height:19px;line-height:19px;text-align:right;padding-right:3px;font-size:13px">903</div>
<div style="left:311px;top:561px;width:1px;height:19px;background:#e8e8e8"></div>
<div class="c" style="left:311px;top:561px;width:20px;height:19px;line-height:19px;text-align:right;padding-right:3px;font-size:13px">4</div>
<div style="left:331px;top:561px;width:1px;height:19px;background:#e8e8e8"></div>
<div class="c" style="left:331px;top:561px;width:102px;height:19px;line-height:19px;padding-left:3px;font-size:13px"><span style="display:inline-block;transform:scaleX(0.733);transform-origin:left">食　料</span></div>
<div style="left:433px;top:561px;width:1px;height:19px;background:#e8e8e8"></div>
<div class="c" style="left:433px;top:561px;width:103px;height:19px;line-height:19px;padding-left:3px;font-size:13px"><span style="display:inline-block;transform:scaleX(0.846);transform-origin:left">惣菜等</span></div>
<div style="left:536px;top:561px;width:1px;height:19px;background:#e8e8e8"></div>
<div class="c" style="left:536px;top:561px;width:103px;height:19px;line-height:19px;padding-left:3px;font-size:13px"><span style="display:inline-block;transform:scaleX(0.564);transform-origin:left">チルド・レトルト・パウチ</span></div>
<div style="left:639px;top:561px;width:1px;height:19px;background:#e8e8e8"></div>
<div class="c" style="left:639px;top:561px;width:216px;height:19px;line-height:19px;padding-left:3px;font-size:13px"><span style="display:inline-block;transform:scaleX(0.670);transform-origin:left">【軽】ベストプライス　ビーフカレー辛口　200ｇ　2点</span></div>
<div style="left:855px;top:561px;width:1px;height:19px;background:#e8e8e8"></div>
<div class="c" style="left:855px;top:561px;width:82px;height:19px;line-height:19px;text-align:right;padding-right:3px;font-size:13px">156</div>
<div style="left:937px;top:561px;width:1px;height:19px;background:#e8e8e8"></div>
<div class="c" style="left:937px;top:561px;width:75px;height:19px;line-height:19px;text-align:right;padding-right:3px;font-size:13px">12</div>
<div style="left:1012px;top:561px;width:1px;height:19px;background:#e8e8e8"></div>
<div class="c" style="left:1012px;top:561px;width:82px;height:19px;line-height:19px;text-align:right;padding-right:3px;font-size:13px">168</div>
<div style="left:1094px;top:561px;width:1px;height:19px;background:#e8e8e8"></div>
<div class="c" style="left:1094px;top:561px;width:48px;height:19px;line-height:19px;text-align:right;padding-right:3px;font-size:13px">8.0%</div>
<div style="left:1142px;top:561px;width:1px;height:19px;background:#e8e8e8"></div>
<div class="c" style="left:1142px;top:561px;width:180px;height:19px;line-height:19px;padding-left:3px;font-size:13px"><span style="display:inline-block;transform:scaleX(0.636);transform-origin:left">ツルハドラッグ　住吉</span></div>
<div style="left:1322px;top:561px;width:1px;height:19px;background:#e8e8e8"></div>
<div style="left:197px;top:598px;width:1125px;height:1px;background:#e8e8e8"></div>
<div class="c" style="left:197px;top:580px;width:60px;height:19px;line-height:19px;padding-left:3px;font-size:13px">19/10/02</div>
<div style="left:257px;top:580px;width:1px;height:19px;background:#e8e8e8"></div>
<div class="c" style="left:257px;top:580px;width:54px;height:19px;line-height:19px;text-align:right;padding-right:3px;font-size:13px">903</div>
<div style="left:311px;top:580px;width:1px;height:19px;background:#e8e8e8"></div>
<div class="c" style="left:311px;top:580px;width:20px;height:19px;line-height:19px;text-align:right;padding-right:3px;font-size:13px">5</div>
<div style="left:331px;top:580px;width:1px;height:19px;background:#e8e8e8"></div>
<div class="c" style="left:331px;top:580px;width:102px;height:19px;line-height:19px;padding-left:3px;font-size:13px"><span style="display:inline-block;transform:scaleX(0.733);transform-origin:left">食　料</span></div>
<div style="left:433px;top:580px;width:1px;height:19px;background:#e8e8e8"></div>
<div class="c" style="left:433px;top:580px;width:103px;height:19px;line-height:19px;padding-left:3px;font-size:13px"><span style="display:inline-block;transform:scaleX(0.846);transform-origin:left">加工食品</span></div>
<div style="left:536px;top:580px;width:1px;height:19px;background:#e8e8e8"></div>
<div class="c" style="left:536px;top:580px;width:103px;height:19px;line-height:19px;padding-left:3px;font-size:13px"><span style="display:inline-block;transform:scaleX(0.763);transform-origin:left">その他の加工品</span></div>
<div style="left:639px;top:580px;width:1px;height:19px;background:#e8e8e8"></div>
<div class="c" style="left:639px;top:580px;width:216px;height:19px;line-height:19px;padding-left:3px;font-size:13px"><span style="display:inline-block;transform:scaleX(0.723);transform-origin:left">【軽】煮物の具　大根　40ｇ</span></div>
<div style="left:855px;top:580px;width:1px;height:19px;background:#e8e8e8"></div>
<div class="c" style="left:855px;top:580px;width:82px;height:19px;line-height:19px;text-align:right;padding-right:3px;font-size:13px">98</div>
<div style="left:937px;top:580px;width:1px;height:19px;background:#e8e8e8"></div>
<div class="c" style="left:937px;top:580px;width:75px;height:19px;line-height:19px;text-align:right;padding-right:3px;font-size:13px">7</div>
<div style="left:1012px;top:580px;width:1px;height:19px;background:#e8e8e8"></div>
<div class="c" style="left:1012px;top:580px;width:82px;height:19px;line-height:19px;text-align:right;padding-right:3px;font-size:13px">105</div>
<div style="left:1094px;top:580px;width:1px;height:19px;background:#e8e8e8"></div>
<div class="c" style="left:1094px;top:580px;width:48px;height:19px;line-height:19px;text-align:right;padding-right:3px;font-size:13px">8.0%</div>
<div style="left:1142px;top:580px;width:1px;height:19px;background:#e8e8e8"></div>
<div class="c" style="left:1142px;top:580px;width:180px;height:19px;line-height:19px;padding-left:3px;font-size:13px"><span style="display:inline-block;transform:scaleX(0.636);transform-origin:left">ツルハドラッグ　住吉</span></div>
<div style="left:1322px;top:580px;width:1px;height:19px;background:#e8e8e8"></div>
<div style="left:197px;top:617px;width:1125px;height:1px;background:#e8e8e8"></div>
<div class="c" style="left:197px;top:599px;width:60px;height:19px;line-height:19px;padding-left:3px;font-size:13px">19/10/02</div>
<div style="left:257px;top:599px;width:1px;height:19px;background:#e8e8e8"></div>
<div class="c" style="left:257px;top:599px;width:54px;height:19px;line-height:19px;text-align:right;padding-right:3px;font-size:13px">903</div>
<div style="left:311px;top:599px;width:1px;height:19px;background:#e8e8e8"></div>
<div class="c" style="left:311px;top:599px;width:20px;height:19px;line-height:19px;text-align:right;padding-right:3px;font-size:13px">6</div>
<div style="left:331px;top:599px;width:1px;height:19px;background:#e8e8e8"></div>
<div class="c" style="left:331px;top:599px;width:102px;height:19px;line-height:19px;padding-left:3px;font-size:13px"><span style="display:inline-block;transform:scaleX(0.733);transform-origin:left">食　料</span></div>
<div style="left:433px;top:599px;width:1px;height:19px;background:#e8e8e8"></div>
<div class="c" style="left:433px;top:599px;width:103px;height:19px;line-height:19px;padding-left:3px;font-size:13px"><span style="display:inline-block;transform:scaleX(0.846);transform-origin:left">加工食品</span></div>
<div style="left:536px;top:599px;width:1px;height:19px;background:#e8e8e8"></div>
<div class="c" style="left:536px;top:599px;width:103px;height:19px;line-height:19px;padding-left:3px;font-size:13px"><span style="display:inline-block;transform:scaleX(0.846);transform-origin:left">海産乾物</span></div>
<div style="left:639px;top:599px;width:1px;height:19px;background:#e8e8e8"></div>
<div class="c" style="left:639px;top:599px;width:216px;height:19px;line-height:19px;padding-left:3px;font-size:13px"><span style="display:inline-block;transform:scaleX(0.682);transform-origin:left">【軽】芽ひじき　35ｇ</span></div>
<div style="left:855px;top:599px;width:1px;height:19px;background:#e8e8e8"></div>
<div class="c" style="left:855px;top:599px;width:82px;height:19px;line-height:19px;text-align:right;padding-right:3px;font-size:13px">98</div>
<div style="left:937px;top:599px;width:1px;height:19px;background:#e8e8e8"></div>
<div class="c" style="left:937px;top:599px;width:75px;height:19px;line-height:19px;text-align:right;padding-right:3px;font-size:13px">7</div>
<div style="left:1012px;top:599px;width:1px;height:19px;background:#e8e8e8"></div>
<div class="c" style="left:1012px;top:599px;width:82px;height:19px;line-height:19px;text-align:right;padding-right:3px;font-size:13px">105</div>
<div style="left:1094px;top:599px;width:1px;height:19px;background:#e8e8e8"></div>
<div class="c" style="left:1094px;top:599px;width:48px;height:19px;line-height:19px;text-align:right;padding-right:3px;font-size:13px">8.0%</div>
<div style="left:1142px;top:599px;width:1px;height:19px;background:#e8e8e8"></div>
<div class="c" style="left:1142px;top:599px;width:180px;height:19px;line-height:19px;padding-left:3px;font-size:13px"><span style="display:inline-block;transform:scaleX(0.636);transform-origin:left">ツルハドラッグ　住吉</span></div>
<div style="left:1322px;top:599px;width:1px;height:19px;background:#e8e8e8"></div>
<div style="left:197px;top:636px;width:1125px;height:1px;background:#e8e8e8"></div>
<div class="c" style="left:197px;top:618px;width:60px;height:19px;line-height:19px;padding-left:3px;font-size:13px">19/10/02</div>
<div style="left:257px;top:618px;width:1px;height:19px;background:#e8e8e8"></div>
<div class="c" style="left:257px;top:618px;width:54px;height:19px;line-height:19px;text-align:right;padding-right:3px;font-size:13px">903</div>
<div style="left:311px;top:618px;width:1px;height:19px;background:#e8e8e8"></div>
<div class="c" style="left:311px;top:618px;width:20px;height:19px;line-height:19px;text-align:right;padding-right:3px;font-size:13px">7</div>
<div style="left:331px;top:618px;width:1px;height:19px;background:#e8e8e8"></div>
<div class="c" style="left:331px;top:618px;width:102px;height:19px;line-height:19px;padding-left:3px;font-size:13px"><span style="display:inline-block;transform:scaleX(0.733);transform-origin:left">食　料</span></div>
<div style="left:433px;top:618px;width:1px;height:19px;background:#e8e8e8"></div>
<div class="c" style="left:433px;top:618px;width:103px;height:19px;line-height:19px;padding-left:3px;font-size:13px"><span style="display:inline-block;transform:scaleX(0.697);transform-origin:left">穀類・いも類</span></div>
<div style="left:536px;top:618px;width:1px;height:19px;background:#e8e8e8"></div>
<div class="c" style="left:536px;top:618px;width:103px;height:19px;line-height:19px;padding-left:3px;font-size:13px"><span style="display:inline-block;transform:scaleX(0.604);transform-origin:left">そ　ば</span></div>
<div style="left:639px;top:618px;width:1px;height:19px;background:#e8e8e8"></div>
<div class="c" style="left:639px;top:618px;width:216px;height:19px;line-height:19px;padding-left:3px;font-size:13px"><span style="display:inline-block;transform:scaleX(0.739);transform-origin:left">【軽】乾麺　霧谷そば270ｇ　3点</span></div>
<div style="left:855px;top:618px;width:1px;height:19px;background:#e8e8e8"></div>
<div class="c" style="left:855px;top:618px;width:82px;height:19px;line-height:19px;text-align:right;padding-right:3px;font-size:13px">292</div>
<div style="left:937px;top:618px;width:1px;height:19px;background:#e8e8e8"></div>
<div class="c" style="left:937px;top:618px;width:75px;height:19px;line-height:19px;text-align:right;padding-right:3px;font-size:13px">23</div>
<div style="left:1012px;top:618px;width:1px;height:19px;background:#e8e8e8"></div>
<div class="c" style="left:1012px;top:618px;width:82px;height:19px;line-height:19px;text-align:right;padding-right:3px;font-size:13px">315</div>
<div style="left:1094px;top:618px;width:1px;height:19px;background:#e8e8e8"></div>
<div class="c" style="left:1094px;top:618px;width:48px;height:19px;line-height:19px;text-align:right;padding-right:3px;font-size:13px">8.0%</div>
<div style="left:1142px;top:618px;width:1px;height:19px;background:#e8e8e8"></div>
<div class="c" style="left:1142px;top:618px;width:180px;height:19px;line-height:19px;padding-left:3px;font-size:13px"><span style="display:inline-block;transform:scaleX(0.636);transform-origin:left">ツルハドラッグ　住吉</span></div>
<div style="left:1322px;top:618px;width:1px;height:19px;background:#e8e8e8"></div>
<div style="left:197px;top:655px;width:1125px;height:1px;background:#e8e8e8"></div>
<div class="c" style="left:197px;top:637px;width:60px;height:19px;line-height:19px;padding-left:3px;font-size:13px">19/10/02</div>
<div style="left:257px;top:637px;width:1px;height:19px;background:#e8e8e8"></div>
<div class="c" style="left:257px;top:637px;width:54px;height:19px;line-height:19px;text-align:right;padding-right:3px;font-size:13px">903</div>
<div style="left:311px;top:637px;width:1px;height:19px;background:#e8e8e8"></div>
<div class="c" style="left:311px;top:637px;width:20px;height:19px;line-height:19px;text-align:right;padding-right:3px;font-size:13px">8</div>
<div style="left:331px;top:637px;width:1px;height:19px;background:#e8e8e8"></div>
<div class="c" style="left:331px;top:637px;width:102px;height:19px;line-height:19px;padding-left:3px;font-size:13px"><span style="display:inline-block;transform:scaleX(0.733);transform-origin:left">食　料</span></div>
<div style="left:433px;top:637px;width:1px;height:19px;background:#e8e8e8"></div>
<div class="c" style="left:433px;top:637px;width:103px;height:19px;line-height:19px;padding-left:3px;font-size:13px"><span style="display:inline-block;transform:scaleX(0.846);transform-origin:left">乳製品</span></div>
<div style="left:536px;top:637px;width:1px;height:19px;background:#e8e8e8"></div>
<div class="c" style="left:536px;top:637px;width:103px;height:19px;line-height:19px;padding-left:3px;font-size:13px"><span style="display:inline-block;transform:scaleX(0.733);transform-origin:left">牛　乳</span></div>
<div style="left:639px;top:637px;width:1px;height:19px;background:#e8e8e8"></div>
<div class="c" style="left:639px;top:637px;width:216px;height:19px;line-height:19px;padding-left:3px;font-size:13px"><span style="display:inline-block;transform:scaleX(0.721);transform-origin:left">【軽】まきばの恵み　1000㎖　2点</span></div>
<div style="left:855px;top:637px;width:1px;height:19px;background:#e8e8e8"></div>
<div class="c" style="left:855px;top:637px;width:82px;height:19px;line-height:19px;text-align:right;padding-right:3px;font-size:13px">315</div>
<div style="left:937px;top:637px;width:1px;height:19px;background:#e8e8e8"></div>
<div class="c" style="left:937px;top:637px;width:75px;height:19px;line-height:19px;text-align:right;padding-right:3px;font-size:13px">25</div>
<div style="left:1012px;top:637px;width:1px;height:19px;background:#e8e8e8"></div>
<div class="c" style="left:1012px;top:637px;width:82px;height:19px;line-height:19px;text-align:right;padding-right:3px;font-size:13px">340</div>
<div style="left:1094px;top:637px;width:1px;height:19px;background:#e8e8e8"></div>
<div class="c" style="left:1094px;top:637px;width:48px;height:19px;line-height:19px;text-align:right;padding-right:3px;font-size:13px">8.0%</div>
<div style="left:1142px;top:637px;width:1px;height:19px;background:#e8e8e8"></div>
<div class="c" style="left:1142px;top:637px;width:180px;height:19px;line-height:19px;padding-left:3px;font-size:13px"><span style="display:inline-block;transform:scaleX(0.636);transform-origin:left">ツルハドラッグ　住吉</span></div>
<div style="left:1322px;top:637px;width:1px;height:19px;background:#e8e8e8"></div>
<div style="left:197px;top:674px;width:1125px;height:1px;background:#e8e8e8"></div>
<div class="c" style="left:197px;top:656px;width:60px;height:19px;line-height:19px;padding-left:3px;font-size:13px">19/10/02</div>
<div style="left:257px;top:656px;width:1px;height:19px;background:#e8e8e8"></div>
<div class="c" style="left:257px;top:656px;width:54px;height:19px;line-height:19px;text-align:right;padding-right:3px;font-size:13px">903</div>
<div style="left:311px;top:656px;width:1px;height:19px;background:#e8e8e8"></div>
<div class="c" style="left:311px;top:656px;width:20px;height:19px;line-height:19px;text-align:right;padding-right:3px;font-size:13px">9</div>
<div style="left:331px;top:656px;width:1px;height:19px;background:#e8e8e8"></div>
<div class="c" style="left:331px;top:656px;width:102px;height:19px;line-height:19px;padding-left:3px;font-size:13px"><span style="display:inline-block;transform:scaleX(0.733);transform-origin:left">食　料</span></div>
<div style="left:433px;top:656px;width:1px;height:19px;background:#e8e8e8"></div>
<div class="c" style="left:433px;top:656px;width:103px;height:19px;line-height:19px;padding-left:3px;font-size:13px"><span style="display:inline-block;transform:scaleX(0.781);transform-origin:left">値引き</span></div>
<div style="left:536px;top:656px;width:1px;height:19px;background:#e8e8e8"></div>
<div class="c" style="left:536px;top:656px;width:103px;height:19px;line-height:19px;padding-left:3px;font-size:13px"></div>
<div style="left:639px;top:656px;width:1px;height:19px;background:#e8e8e8"></div>
<div class="c" style="left:639px;top:656px;width:216px;height:19px;line-height:19px;padding-left:3px;font-size:13px"><span style="display:inline-block;transform:scaleX(0.650);transform-origin:left">【軽】【軽】ツルハカード５％割引</span></div>
<div style="left:855px;top:656px;width:1px;height:19px;background:#e8e8e8"></div>
<div class="c" style="left:855px;top:656px;width:82px;height:19px;line-height:19px;text-align:right;padding-right:3px;font-size:13px">-63</div>
<div style="left:937px;top:656px;width:1px;height:19px;background:#e8e8e8"></div>
<div class="c" style="left:937px;top:656px;width:75px;height:19px;line-height:19px;text-align:right;padding-right:3px;font-size:13px">-5</div>
<div style="left:1012px;top:656px;width:1px;height:19px;background:#e8e8e8"></div>
<div class="c" style="left:1012px;top:656px;width:82px;height:19px;line-height:19px;text-align:right;padding-right:3px;font-size:13px">-68</div>
<div style="left:1094px;top:656px;width:1px;height:19px;background:#e8e8e8"></div>
<div class="c" style="left:1094px;top:656px;width:48px;height:19px;line-height:19px;text-align:right;padding-right:3px;font-size:13px">8.0%</div>
<div style="left:1142px;top:656px;width:1px;height:19px;background:#e8e8e8"></div>
<div class="c" style="left:1142px;top:656px;width:180px;height:19px;line-height:19px;padding-left:3px;font-size:13px"><span style="display:inline-block;transform:scaleX(0.636);transform-origin:left">ツルハドラッグ　住吉</span></div>
<div style="left:1322px;top:656px;width:1px;height:19px;background:#e8e8e8"></div>
<div style="left:197px;top:693px;width:1125px;height:1px;background:#e8e8e8"></div>
<div class="c" style="left:197px;top:675px;width:60px;height:19px;line-height:19px;padding-left:3px;font-size:13px">19/10/04</div>
<div style="left:257px;top:675px;width:1px;height:19px;background:#e8e8e8"></div>
<div class="c" style="left:257px;top:675px;width:54px;height:19px;line-height:19px;text-align:right;padding-right:3px;font-size:13px">904</div>
<div style="left:311px;top:675px;width:1px;height:19px;background:#e8e8e8"></div>
<div class="c" style="left:311px;top:675px;width:20px;height:19px;line-height:19px;text-align:right;padding-right:3px;font-size:13px">1</div>
<div style="left:331px;top:675px;width:1px;height:19px;background:#e8e8e8"></div>
<div class="c" style="left:331px;top:675px;width:102px;height:19px;line-height:19px;padding-left:3px;font-size:13px"><span style="display:inline-block;transform:scaleX(0.733);transform-origin:left">食　料</span></div>
<div style="left:433px;top:675px;width:1px;height:19px;background:#e8e8e8"></div>
<div class="c" style="left:433px;top:675px;width:103px;height:19px;line-height:19px;padding-left:3px;font-size:13px"><span style="display:inline-block;transform:scaleX(0.697);transform-origin:left">穀類・いも類</span></div>
<div style="left:536px;top:675px;width:1px;height:19px;background:#e8e8e8"></div>
<div class="c" style="left:536px;top:675px;width:103px;height:19px;line-height:19px;padding-left:3px;font-size:13px"><span style="display:inline-block;transform:scaleX(0.609);transform-origin:left">パスタ</span></div>
<div style="left:639px;top:675px;width:1px;height:19px;background:#e8e8e8"></div>
<div class="c" style="left:639px;top:675px;width:216px;height:19px;line-height:19px;padding-left:3px;font-size:13px"><span style="display:inline-block;transform:scaleX(0.614);transform-origin:left">【軽】スパゲッティ　アントニオデニーロ　1㎏</span></div>
<div style="left:855px;top:675px;width:1px;height:19px;background:#e8e8e8"></div>
<div class="c" style="left:855px;top:675px;width:82px;height:19px;line-height:19px;text-align:right;padding-right:3px;font-size:13px">195</div>
<div style="left:937px;top:675px;width:1px;height:19px;background:#e8e8e8"></div>
<div class="c" style="left:937px;top:675px;width:75px;height:19px;line-height:19px;text-align:right;padding-right:3px;font-size:13px">15</div>
<div style="left:1012px;top:675px;width:1px;height:19px;background:#e8e8e8"></div>
<div class="c" style="left:1012px;top:675px;width:82px;height:19px;line-height:19px;text-align:right;padding-right:3px;font-size:13px">210</div>
<div style="left:1094px;top:675px;width:1px;height:19px;background:#e8e8e8"></div>
<div class="c" style="left:1094px;top:675px;width:48px;height:19px;line-height:19px;text-align:right;padding-right:3px;font-size:13px">8.0%</div>
<div style="left:1142px;top:675px;width:1px;height:19px;background:#e8e8e8"></div>
<div class="c" style="left:1142px;top:675px;width:180px;height:19px;line-height:19px;padding-left:3px;font-size:13px"><span style="display:inline-block;transform:scaleX(0.723);transform-origin:left">フードD　双葉</span></div>
<div style="left:1322px;top:675px;width:1px;height:19px;background:#e8e8e8"></div>
<div style="left:197px;top:712px;width:1125px;height:1px;background:#e8e8e8"></div>
<div class="c" style="left:197px;top:694px;width:60px;height:19px;line-height:19px;padding-left:3px;font-size:13px">19/10/04</div>
<div style="left:257px;top:694px;width:1px;height:19px;background:#e8e8e8"></div>
<div class="c" style="left:257px;top:694px;width:54px;height:19px;line-height:19px;text-align:right;padding-right:3px;font-size:13px">904</div>
<div style="left:311px;top:694px;width:1px;height:19px;background:#e8e8e8"></div>
<div class="c" style="left:311px;top:694px;width:20px;height:19px;line-height:19px;text-align:right;padding-right:3px;font-size:13px">2</div>
<div style="left:331px;top:694px;width:1px;height:19px;background:#e8e8e8"></div>
<div class="c" style="left:331px;top:694px;width:102px;height:19px;line-height:19px;padding-left:3px;font-size:13px"><span style="display:inline-block;transform:scaleX(0.733);transform-origin:left">食　料</span></div>
<div style="left:433px;top:694px;width:1px;height:19px;background:#e8e8e8"></div>
<div class="c" style="left:433px;top:694px;width:103px;height:19px;line-height:19px;padding-left:3px;font-size:13px"><span style="display:inline-block;transform:scaleX(0.846);transform-origin:left">野菜類</span></div>
<div style="left:536px;top:694px;width:1px;height:19px;background:#e8e8e8"></div>
<div class="c" style="left:536px;top:694px;width:103px;height:19px;line-height:19px;padding-left:3px;font-size:13px"><span style="display:inline-block;transform:scaleX(0.733);transform-origin:left">葉　菜</span></div>
<div style="left:639px;top:694px;width:1px;height:19px;background:#e8e8e8"></div>
<div class="c" style="left:639px;top:694px;width:216px;height:19px;line-height:19px;padding-left:3px;font-size:13px"><span style="display:inline-block;transform:scaleX(0.615);transform-origin:left">【軽】レタス</span></div>
<div style="left:855px;top:694px;width:1px;height:19px;background:#e8e8e8"></div>
<div class="c" style="left:855px;top:694px;width:82px;height:19px;line-height:19px;text-align:right;padding-right:3px;font-size:13px">158</div>
<div style="left:937px;top:694px;width:1px;height:19px;background:#e8e8e8"></div>
<div class="c" style="left:937px;top:694px;width:75px;height:19px;line-height:19px;text-align:right;padding-right:3px;font-size:13px">12</div>
<div style="left:1012px;top:694px;width:1px;height:19px;background:#e8e8e8"></div>
<div class="c" style="left:1012px;top:694px;width:82px;height:19px;line-height:19px;text-align:right;padding-right:3px;font-size:13px">170</div>
<div style="left:1094px;top:694px;width:1px;height:19px;background:#e8e8e8"></div>
<div class="c" style="left:1094px;top:694px;width:48px;height:19px;line-height:19px;text-align:right;padding-right:3px;font-size:13px">8.0%</div>
<div style="left:1142px;top:694px;width:1px;height:19px;background:#e8e8e8"></div>
<div class="c" style="left:1142px;top:694px;width:180px;height:19px;line-height:19px;padding-left:3px;font-size:13px"><span style="display:inline-block;transform:scaleX(0.723);transform-origin:left">フードD　双葉</span></div>
<div style="left:1322px;top:694px;width:1px;height:19px;background:#e8e8e8"></div>
<div style="left:197px;top:731px;width:1125px;height:1px;background:#e8e8e8"></div>
<div class="c" style="left:197px;top:713px;width:60px;height:19px;line-height:19px;padding-left:3px;font-size:13px">19/10/04</div>
<div style="left:257px;top:713px;width:1px;height:19px;background:#e8e8e8"></div>
<div class="c" style="left:257px;top:713px;width:54px;height:19px;line-height:19px;text-align:right;padding-right:3px;font-size:13px">904</div>
<div style="left:311px;top:713px;width:1px;height:19px;background:#e8e8e8"></div>
<div class="c" style="left:311px;top:713px;width:20px;height:19px;line-height:19px;text-align:right;padding-right:3px;font-size:13px">3</div>
<div style="left:331px;top:713px;width:1px;height:19px;background:#e8e8e8"></div>
<div class="c" style="left:331px;top:713px;width:102px;height:19px;line-height:19px;padding-left:3px;font-size:13px"><span style="display:inline-block;transform:scaleX(0.733);transform-origin:left">食　料</span></div>
<div style="left:433px;top:713px;width:1px;height:19px;background:#e8e8e8"></div>
<div class="c" style="left:433px;top:713px;width:103px;height:19px;line-height:19px;padding-left:3px;font-size:13px"><span style="display:inline-block;transform:scaleX(0.846);transform-origin:left">野菜類</span></div>
<div style="left:536px;top:713px;width:1px;height:19px;background:#e8e8e8"></div>
<div class="c" style="left:536px;top:713px;width:103px;height:19px;line-height:19px;padding-left:3px;font-size:13px"><span style="display:inline-block;transform:scaleX(0.700);transform-origin:left">きのこ類</span></div>
<div style="left:639px;top:713px;width:1px;height:19px;background:#e8e8e8"></div>
<div class="c" style="left:639px;top:713px;width:216px;height:19px;line-height:19px;padding-left:3px;font-size:13px"><span style="display:inline-block;transform:scaleX(0.697);transform-origin:left">【軽】生しいたけ　良品袋</span></div>
<div style="left:855px;top:713px;width:1px;height:19px;background:#e8e8e8"></div>
<div class="c" style="left:855px;top:713px;width:82px;height:19px;line-height:19px;text-align:right;padding-right:3px;font-size:13px">158</div>
<div style="left:937px;top:713px;width:1px;height:19px;background:#e8e8e8"></div>
<div class="c" style="left:937px;top:713px;width:75px;height:19px;line-height:19px;text-align:right;padding-right:3px;font-size:13px">12</div>
<div style="left:1012px;top:713px;width:1px;height:19px;background:#e8e8e8"></div>
<div class="c" style="left:1012px;top:713px;width:82px;height:19px;line-height:19px;text-align:right;padding-right:3px;font-size:13px">170</div>
<div style="left:1094px;top:713px;width:1px;height:19px;background:#e8e8e8"></div>
<div class="c" style="left:1094px;top:713px;width:48px;height:19px;line-height:19px;text-align:right;padding-right:3px;font-size:13px">8.0%</div>
<div style="left:1142px;top:713px;width:1px;height:19px;background:#e8e8e8"></div>
<div class="c" style="left:1142px;top:713px;width:180px;height:19px;line-height:19px;padding-left:3px;font-size:13px"><span style="display:inline-block;transform:scaleX(0.723);transform-origin:left">フードD　双葉</span></div>
<div style="left:1322px;top:713px;width:1px;height:19px;background:#e8e8e8"></div>
<div style="left:1329px;top:488px;width:16px;height:259px;background:#f0f0f0"></div>
<div style="left:1329px;top:505px;width:16px;height:37px;background:#cdcdcd"></div>
<svg style="position:absolute;left:1332px;top:494px" width="10" height="6"><path d="M1 5 L5 1 L9 5" stroke="#606060" stroke-width="1.6" fill="none"/></svg>
<svg style="position:absolute;left:1332px;top:735px" width="10" height="6"><path d="M1 1 L5 5 L9 1" stroke="#606060" stroke-width="1.6" fill="none"/></svg>
<div style="left:193px;top:749px;width:1156px;height:1px;background:#d0d0d0"></div>
<div style="left:895px;top:79px;width:271px;height:154px;border:5px solid #ff0000;box-sizing:border-box"></div>
<div style="left:70px;top:714px;width:134px;height:39px;border:5px solid #ff0000;box-sizing:border-box"></div>
</body></html>
